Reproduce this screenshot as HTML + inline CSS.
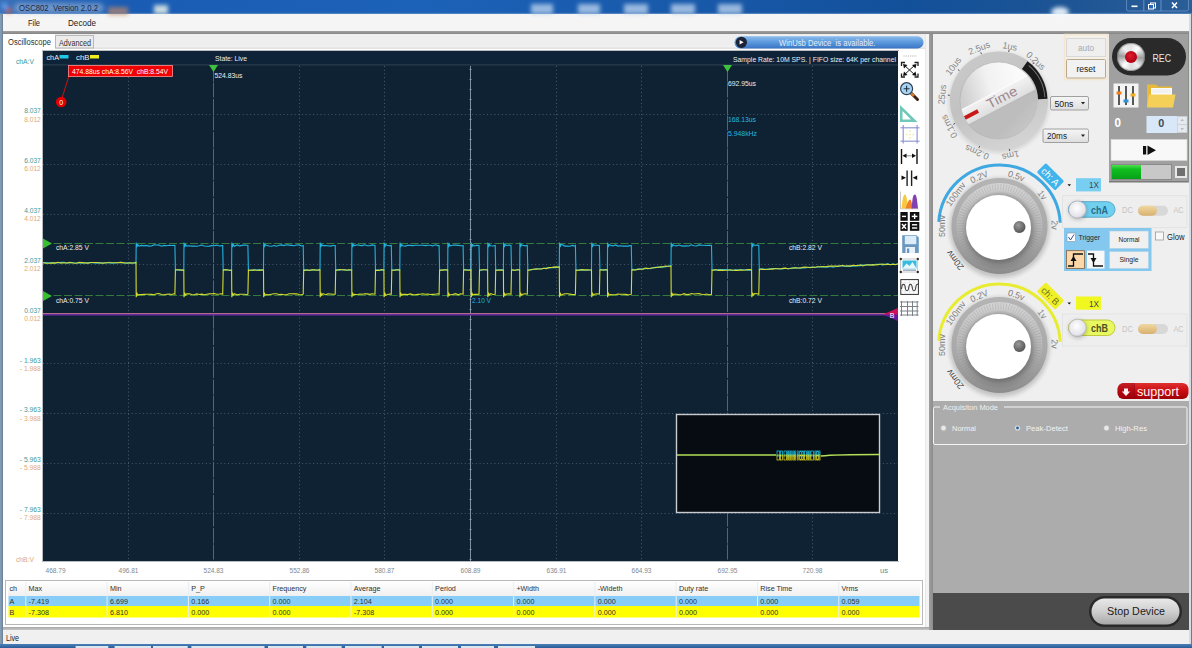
<!DOCTYPE html>
<html><head><meta charset="utf-8">
<style>
*{margin:0;padding:0;box-sizing:border-box}
html,body{width:1192px;height:648px;overflow:hidden;background:#f0f0f0;font-family:"Liberation Sans",sans-serif;position:relative}
.a{position:absolute}
svg text{font-family:"Liberation Sans",sans-serif}
</style></head><body>
<!-- menu -->
<div class="a" style="left:0;top:14px;width:1192px;height:17px;background:#f5f5f5"></div>
<div class="a" style="left:0;top:31px;width:1192px;height:3px;background:linear-gradient(#a0a0a0,#858585)"></div>
<!-- tab strip -->
<div class="a" style="left:0;top:34px;width:929px;height:16px;background:linear-gradient(#eeeeee 0,#eeeeee 11px,#f2f2f2 12px,#dedede 15px,#ffffff 16px)"></div>
<div class="a" style="left:3px;top:34px;width:52px;height:16px;background:#ffffff"></div>
<!-- left panel -->
<div class="a" style="left:3px;top:49px;width:923px;height:578px;background:#ffffff"></div>
<div class="a" style="left:925px;top:34px;width:1px;height:593px;background:#e8e8e8"></div>
<div class="a" style="left:42px;top:50px;width:857px;height:512px;background:#b8bcc0"></div>
<svg class="a" style="left:43px;top:51px" width="855" height="510" viewBox="43 51 855 510">
<rect x="43" y="51" width="855" height="510" fill="#0f2233"/>
<rect x="43" y="51" width="855" height="13.5" fill="#0e2238"/>
<line x1="43" y1="64.8" x2="898" y2="64.8" stroke="#2a3c4e" stroke-width="1.2"/>
<line x1="128.5" y1="66" x2="128.5" y2="561" stroke="#6a7a8a" stroke-width="1" stroke-dasharray="1 2.7" opacity="0.65"/>
<line x1="213.5" y1="66" x2="213.5" y2="561" stroke="#6a7a8a" stroke-width="1" stroke-dasharray="1 2.7" opacity="0.65"/>
<line x1="299.5" y1="66" x2="299.5" y2="561" stroke="#6a7a8a" stroke-width="1" stroke-dasharray="1 2.7" opacity="0.65"/>
<line x1="384.5" y1="66" x2="384.5" y2="561" stroke="#6a7a8a" stroke-width="1" stroke-dasharray="1 2.7" opacity="0.65"/>
<line x1="556.5" y1="66" x2="556.5" y2="561" stroke="#6a7a8a" stroke-width="1" stroke-dasharray="1 2.7" opacity="0.65"/>
<line x1="641.5" y1="66" x2="641.5" y2="561" stroke="#6a7a8a" stroke-width="1" stroke-dasharray="1 2.7" opacity="0.65"/>
<line x1="727.5" y1="66" x2="727.5" y2="561" stroke="#6a7a8a" stroke-width="1" stroke-dasharray="1 2.7" opacity="0.65"/>
<line x1="812.5" y1="66" x2="812.5" y2="561" stroke="#6a7a8a" stroke-width="1" stroke-dasharray="1 2.7" opacity="0.65"/>
<line x1="43" y1="114.5" x2="898" y2="114.5" stroke="#6a7a8a" stroke-width="1" stroke-dasharray="1 2.7" opacity="0.6"/>
<line x1="43" y1="164.5" x2="898" y2="164.5" stroke="#6a7a8a" stroke-width="1" stroke-dasharray="1 2.7" opacity="0.6"/>
<line x1="43" y1="214.5" x2="898" y2="214.5" stroke="#6a7a8a" stroke-width="1" stroke-dasharray="1 2.7" opacity="0.6"/>
<line x1="43" y1="264.5" x2="898" y2="264.5" stroke="#6a7a8a" stroke-width="1" stroke-dasharray="1 2.7" opacity="0.6"/>
<line x1="43" y1="313.5" x2="898" y2="313.5" stroke="#6a7a8a" stroke-width="1" stroke-dasharray="1 2.7" opacity="0.6"/>
<line x1="43" y1="363.5" x2="898" y2="363.5" stroke="#6a7a8a" stroke-width="1" stroke-dasharray="1 2.7" opacity="0.6"/>
<line x1="43" y1="413.5" x2="898" y2="413.5" stroke="#6a7a8a" stroke-width="1" stroke-dasharray="1 2.7" opacity="0.6"/>
<line x1="43" y1="463.5" x2="898" y2="463.5" stroke="#6a7a8a" stroke-width="1" stroke-dasharray="1 2.7" opacity="0.6"/>
<line x1="43" y1="513.5" x2="898" y2="513.5" stroke="#6a7a8a" stroke-width="1" stroke-dasharray="1 2.7" opacity="0.6"/>
<line x1="470.5" y1="66" x2="470.5" y2="561" stroke="#8090a0" stroke-width="1"/>
<rect x="469.5" y="69" width="2" height="1" fill="#98a8b8" opacity="0.8"/>
<rect x="469.5" y="79" width="2" height="1" fill="#98a8b8" opacity="0.8"/>
<rect x="469.5" y="89" width="2" height="1" fill="#98a8b8" opacity="0.8"/>
<rect x="469.5" y="99" width="2" height="1" fill="#98a8b8" opacity="0.8"/>
<rect x="469.5" y="109" width="2" height="1" fill="#98a8b8" opacity="0.8"/>
<rect x="469.5" y="119" width="2" height="1" fill="#98a8b8" opacity="0.8"/>
<rect x="469.5" y="129" width="2" height="1" fill="#98a8b8" opacity="0.8"/>
<rect x="469.5" y="139" width="2" height="1" fill="#98a8b8" opacity="0.8"/>
<rect x="469.5" y="149" width="2" height="1" fill="#98a8b8" opacity="0.8"/>
<rect x="469.5" y="159" width="2" height="1" fill="#98a8b8" opacity="0.8"/>
<rect x="469.5" y="169" width="2" height="1" fill="#98a8b8" opacity="0.8"/>
<rect x="469.5" y="179" width="2" height="1" fill="#98a8b8" opacity="0.8"/>
<rect x="469.5" y="189" width="2" height="1" fill="#98a8b8" opacity="0.8"/>
<rect x="469.5" y="199" width="2" height="1" fill="#98a8b8" opacity="0.8"/>
<rect x="469.5" y="209" width="2" height="1" fill="#98a8b8" opacity="0.8"/>
<rect x="469.5" y="219" width="2" height="1" fill="#98a8b8" opacity="0.8"/>
<rect x="469.5" y="229" width="2" height="1" fill="#98a8b8" opacity="0.8"/>
<rect x="469.5" y="239" width="2" height="1" fill="#98a8b8" opacity="0.8"/>
<rect x="469.5" y="249" width="2" height="1" fill="#98a8b8" opacity="0.8"/>
<rect x="469.5" y="259" width="2" height="1" fill="#98a8b8" opacity="0.8"/>
<rect x="469.5" y="269" width="2" height="1" fill="#98a8b8" opacity="0.8"/>
<rect x="469.5" y="279" width="2" height="1" fill="#98a8b8" opacity="0.8"/>
<rect x="469.5" y="289" width="2" height="1" fill="#98a8b8" opacity="0.8"/>
<rect x="469.5" y="299" width="2" height="1" fill="#98a8b8" opacity="0.8"/>
<rect x="469.5" y="309" width="2" height="1" fill="#98a8b8" opacity="0.8"/>
<rect x="469.5" y="319" width="2" height="1" fill="#98a8b8" opacity="0.8"/>
<rect x="469.5" y="329" width="2" height="1" fill="#98a8b8" opacity="0.8"/>
<rect x="469.5" y="339" width="2" height="1" fill="#98a8b8" opacity="0.8"/>
<rect x="469.5" y="349" width="2" height="1" fill="#98a8b8" opacity="0.8"/>
<rect x="469.5" y="359" width="2" height="1" fill="#98a8b8" opacity="0.8"/>
<rect x="469.5" y="369" width="2" height="1" fill="#98a8b8" opacity="0.8"/>
<rect x="469.5" y="379" width="2" height="1" fill="#98a8b8" opacity="0.8"/>
<rect x="469.5" y="389" width="2" height="1" fill="#98a8b8" opacity="0.8"/>
<rect x="469.5" y="399" width="2" height="1" fill="#98a8b8" opacity="0.8"/>
<rect x="469.5" y="409" width="2" height="1" fill="#98a8b8" opacity="0.8"/>
<rect x="469.5" y="419" width="2" height="1" fill="#98a8b8" opacity="0.8"/>
<rect x="469.5" y="429" width="2" height="1" fill="#98a8b8" opacity="0.8"/>
<rect x="469.5" y="439" width="2" height="1" fill="#98a8b8" opacity="0.8"/>
<rect x="469.5" y="449" width="2" height="1" fill="#98a8b8" opacity="0.8"/>
<rect x="469.5" y="459" width="2" height="1" fill="#98a8b8" opacity="0.8"/>
<rect x="469.5" y="469" width="2" height="1" fill="#98a8b8" opacity="0.8"/>
<rect x="469.5" y="479" width="2" height="1" fill="#98a8b8" opacity="0.8"/>
<rect x="469.5" y="489" width="2" height="1" fill="#98a8b8" opacity="0.8"/>
<rect x="469.5" y="499" width="2" height="1" fill="#98a8b8" opacity="0.8"/>
<rect x="469.5" y="509" width="2" height="1" fill="#98a8b8" opacity="0.8"/>
<rect x="469.5" y="519" width="2" height="1" fill="#98a8b8" opacity="0.8"/>
<rect x="469.5" y="529" width="2" height="1" fill="#98a8b8" opacity="0.8"/>
<rect x="469.5" y="539" width="2" height="1" fill="#98a8b8" opacity="0.8"/>
<rect x="469.5" y="549" width="2" height="1" fill="#98a8b8" opacity="0.8"/>
<rect x="469.5" y="559" width="2" height="1" fill="#98a8b8" opacity="0.8"/>
<line x1="43" y1="243.5" x2="898" y2="243.5" stroke="#337a3c" stroke-width="1" stroke-dasharray="8 2.5"/>
<line x1="43" y1="295.5" x2="898" y2="295.5" stroke="#337a3c" stroke-width="1" stroke-dasharray="8 2.5"/>
<line x1="213.5" y1="66" x2="213.5" y2="561" stroke="#3a7a4a" stroke-width="1" stroke-dasharray="15 1.5"/>
<polygon points="209.0,65 218.0,65 213.5,72" fill="#3ec23e"/>
<line x1="727.5" y1="66" x2="727.5" y2="561" stroke="#3a7a4a" stroke-width="1" stroke-dasharray="15 1.5"/>
<polygon points="723.0,65 732.0,65 727.5,72" fill="#3ec23e"/>
<line x1="43" y1="313.6" x2="898" y2="313.6" stroke="#c07090" stroke-width="1"/>
<line x1="43" y1="314.8" x2="898" y2="314.8" stroke="#6a2ca0" stroke-width="1.4"/>
<path d="M43.0,262.8 L46.0,262.5 L49.0,262.8 L52.0,262.7 L55.0,262.9 L58.0,262.9 L61.0,262.4 L64.0,262.3 L67.0,263.1 L70.0,262.6 L73.0,262.5 L76.0,263.3 L79.0,262.8 L82.0,263.1 L85.0,262.8 L88.0,262.9 L91.0,262.5 L94.0,262.9 L97.0,263.2 L100.0,262.8 L103.0,263.0 L106.0,263.0 L109.0,262.4 L112.0,263.1 L115.0,262.9 L118.0,262.6 L121.0,262.3 L124.0,263.2 L127.0,262.8 L130.0,263.0 L133.0,263.2 L136.0,263.0 L136.2,242.5 L136.9,247.0 L137.6,244.5 L139.0,246.1 L141.5,245.4 L144.0,245.9 L146.5,245.4 L149.0,246.1 L151.5,246.0 L154.0,244.9 L156.5,245.0 L159.0,245.1 L161.5,246.2 L164.0,245.4 L166.5,245.7 L169.0,245.2 L171.5,245.5 L174.0,245.3 L174.9,245.5 L175.4,270.0 L175.4,270.0 L176.4,269.9 L178.9,270.1 L181.4,270.1 L183.8,270.0 L184.0,242.5 L184.7,247.0 L185.4,244.5 L186.8,246.1 L189.3,245.8 L191.8,246.1 L194.3,246.0 L196.8,246.2 L199.3,245.7 L201.8,245.0 L204.3,246.0 L206.8,246.2 L209.3,246.1 L211.8,245.6 L214.3,245.8 L216.8,245.1 L219.3,246.0 L221.8,245.6 L222.7,245.5 L223.2,270.0 L223.2,270.0 L224.2,269.8 L226.7,269.6 L229.2,270.4 L231.6,270.0 L231.8,242.5 L232.5,247.0 L233.2,244.5 L234.6,246.2 L237.1,244.9 L239.6,245.9 L242.1,245.4 L244.6,245.0 L247.1,245.2 L247.9,245.5 L248.4,270.0 L248.4,270.0 L249.4,270.3 L251.9,270.4 L254.4,269.5 L256.9,270.1 L259.4,269.5 L261.9,270.2 L263.5,270.0 L263.7,242.5 L264.4,247.0 L265.1,244.5 L266.5,245.3 L269.0,246.0 L271.5,246.2 L274.0,245.5 L276.5,246.2 L279.0,245.2 L281.5,244.9 L284.0,245.6 L286.5,244.8 L289.0,245.1 L291.5,245.4 L294.0,245.7 L296.5,245.0 L299.0,244.9 L301.5,246.0 L303.2,245.5 L303.7,270.0 L303.7,270.0 L304.7,269.8 L307.2,270.5 L309.7,270.4 L312.2,269.9 L314.7,270.0 L317.2,270.0 L319.7,270.1 L320.0,270.0 L320.2,242.5 L320.9,247.0 L321.6,244.5 L323.0,245.6 L325.5,245.6 L328.0,245.7 L330.5,246.1 L333.0,245.5 L335.2,245.5 L335.7,270.0 L335.7,270.0 L336.7,269.9 L339.2,270.2 L341.7,269.7 L344.2,269.8 L346.7,270.5 L349.2,270.0 L351.7,270.0 L351.9,242.5 L352.6,247.0 L353.3,244.5 L354.7,245.6 L357.2,244.8 L359.7,245.4 L362.2,245.6 L364.7,244.8 L367.2,245.7 L369.7,245.7 L372.2,244.9 L375.0,245.5 L375.5,270.0 L375.5,270.0 L376.5,270.1 L379.0,270.0 L381.5,270.2 L383.9,270.0 L384.1,242.5 L384.8,247.0 L385.5,244.5 L386.9,245.3 L389.4,245.8 L391.3,245.5 L391.8,270.0 L391.8,270.0 L392.8,270.2 L395.3,269.5 L397.8,269.6 L399.8,270.0 L400.0,242.5 L400.7,247.0 L401.4,244.5 L402.8,245.7 L405.3,246.1 L407.8,245.2 L410.3,245.4 L412.8,245.6 L415.3,245.2 L417.8,245.3 L420.3,245.2 L422.8,245.3 L425.3,245.6 L427.8,245.2 L430.3,245.3 L432.8,245.9 L435.3,244.8 L437.8,245.6 L439.1,245.5 L439.6,270.0 L439.6,270.0 L440.6,270.2 L443.1,269.8 L445.6,269.7 L447.7,270.0 L447.9,242.5 L448.6,247.0 L449.3,244.5 L450.7,245.9 L453.2,245.1 L455.7,245.1 L458.2,245.4 L460.7,245.8 L463.1,245.5 L463.6,270.0 L463.6,270.0 L464.6,269.6 L467.1,269.8 L469.6,269.8 L471.1,270.0 L471.3,242.5 L472.0,247.0 L472.7,244.5 L474.1,246.0 L476.6,245.4 L479.0,245.5 L479.5,270.0 L479.5,270.0 L480.5,270.4 L483.0,269.7 L485.5,269.8 L487.6,270.0 L487.8,242.5 L488.5,247.0 L489.2,244.5 L490.6,245.7 L493.1,246.0 L495.2,245.5 L495.7,270.0 L495.7,270.0 L496.7,270.0 L499.2,269.7 L501.7,269.6 L503.4,270.0 L503.6,242.5 L504.3,247.0 L505.0,244.5 L506.4,245.5 L508.9,245.1 L511.0,245.5 L511.5,270.0 L511.5,270.0 L512.5,270.3 L515.0,270.3 L517.5,269.7 L519.7,270.0 L519.9,242.5 L520.6,247.0 L521.3,244.5 L522.7,245.2 L525.2,245.9 L527.3,245.5 L527.8,270.0 L527.8,270.0 L528.8,270.0 L531.3,270.0 L533.8,269.3 L536.3,268.8 L538.8,268.7 L541.3,269.0 L543.8,268.2 L546.3,268.1 L548.8,267.9 L551.3,267.7 L553.8,267.4 L556.3,267.7 L558.8,266.7 L559.3,267.0 L559.5,242.5 L560.2,247.0 L560.9,244.5 L562.3,244.8 L564.8,246.1 L567.3,246.0 L569.8,246.2 L572.3,245.4 L574.8,246.1 L575.4,245.5 L575.9,270.0 L575.9,270.0 L576.9,270.4 L579.4,269.7 L581.9,270.2 L584.4,270.3 L586.9,270.2 L589.4,270.0 L591.5,270.0 L591.7,242.5 L592.4,247.0 L593.1,244.5 L594.5,245.2 L597.0,245.3 L599.4,245.5 L599.9,270.0 L599.9,270.0 L600.9,269.7 L603.4,269.6 L605.9,270.1 L607.4,270.0 L607.6,242.5 L608.3,247.0 L609.0,244.5 L610.4,245.2 L612.9,245.9 L615.4,244.9 L617.9,246.1 L620.4,245.8 L622.9,246.1 L625.4,246.1 L627.9,246.1 L630.4,245.6 L631.3,245.5 L631.8,270.0 L631.8,270.0 L632.8,269.4 L635.3,269.9 L637.8,269.1 L640.3,268.9 L642.8,269.0 L645.3,268.6 L647.8,268.3 L650.3,268.6 L652.8,268.0 L655.3,267.4 L657.8,267.1 L660.3,267.5 L662.8,266.8 L665.3,266.9 L667.8,266.2 L670.3,265.8 L671.0,266.0 L671.2,242.5 L671.9,247.0 L672.6,244.5 L674.0,245.5 L676.5,245.9 L679.0,245.0 L681.5,245.9 L684.0,246.1 L686.5,245.9 L689.0,246.0 L691.5,244.8 L694.0,245.7 L696.5,246.0 L699.0,244.9 L701.5,245.2 L704.0,245.2 L706.5,245.5 L709.0,245.4 L711.5,245.5 L712.0,270.0 L712.0,270.0 L713.0,270.0 L715.5,270.3 L718.0,269.5 L720.5,269.6 L723.0,269.6 L725.5,269.6 L728.0,269.6 L730.5,270.5 L733.0,270.4 L735.5,269.6 L738.0,270.0 L740.5,269.8 L743.0,269.8 L745.5,269.9 L748.0,270.1 L750.5,270.1 L751.6,270.0 L751.8,242.5 L752.5,247.0 L753.2,244.5 L754.6,245.3 L757.1,245.1 L758.8,245.5 L759.3,269.5 L760.3,269.3 L762.8,268.9 L765.3,269.3 L767.8,269.4 L770.3,268.9 L772.8,268.5 L775.3,268.5 L777.8,268.6 L780.3,268.8 L782.8,268.9 L785.3,268.3 L787.8,268.7 L790.3,268.4 L792.8,268.1 L795.3,267.9 L797.8,268.0 L800.3,268.1 L802.8,267.7 L805.3,267.9 L807.8,267.5 L810.3,267.2 L812.8,267.4 L815.3,267.5 L817.8,266.7 L820.3,267.0 L822.8,266.9 L825.3,267.3 L827.8,267.3 L830.3,266.5 L832.8,267.1 L835.3,266.8 L837.8,266.1 L840.3,266.2 L842.8,265.7 L845.3,266.5 L847.8,266.2 L850.3,266.4 L852.8,266.1 L855.3,265.9 L857.8,265.9 L860.3,265.6 L862.8,264.9 L865.3,265.4 L867.8,264.6 L870.3,264.7 L872.8,265.3 L875.3,264.4 L877.8,264.3 L880.3,264.2 L882.8,265.1 L885.3,264.1 L887.8,263.8 L890.3,264.7 L892.8,263.8 L895.3,264.5 L897.8,264.2 L898.0,264.0" fill="none" stroke="#22b2de" stroke-width="1.1"/>
<path d="M43.0,262.8 L46.0,263.1 L49.0,263.3 L52.0,262.9 L55.0,263.1 L58.0,262.3 L61.0,263.1 L64.0,262.8 L67.0,263.0 L70.0,262.4 L73.0,263.0 L76.0,263.2 L79.0,262.4 L82.0,262.6 L85.0,262.9 L88.0,263.1 L91.0,262.5 L94.0,262.5 L97.0,262.5 L100.0,262.9 L103.0,263.1 L106.0,262.7 L109.0,262.7 L112.0,262.7 L115.0,262.7 L118.0,262.7 L121.0,262.4 L124.0,262.8 L127.0,263.3 L130.0,262.7 L133.0,263.0 L136.0,262.5 L136.2,297.2 L136.9,292.7 L137.6,295.2 L139.0,294.5 L141.5,294.6 L144.0,294.4 L146.5,294.2 L149.0,294.2 L151.5,294.4 L154.0,294.8 L156.5,293.7 L159.0,293.6 L161.5,294.5 L164.0,294.8 L166.5,294.2 L169.0,294.1 L171.5,294.5 L174.0,293.8 L174.9,294.2 L175.4,270.0 L175.4,270.0 L176.4,269.8 L178.9,269.7 L181.4,270.1 L183.8,270.0 L184.0,297.2 L184.7,292.7 L185.4,295.2 L186.8,293.9 L189.3,293.8 L191.8,294.5 L194.3,294.8 L196.8,293.9 L199.3,294.5 L201.8,294.1 L204.3,294.7 L206.8,294.3 L209.3,293.9 L211.8,293.8 L214.3,293.5 L216.8,294.2 L219.3,294.0 L221.8,293.7 L222.7,294.2 L223.2,270.0 L223.2,270.0 L224.2,269.9 L226.7,269.8 L229.2,270.3 L231.6,270.0 L231.8,297.2 L232.5,292.7 L233.2,295.2 L234.6,293.7 L237.1,294.9 L239.6,294.2 L242.1,294.3 L244.6,294.2 L247.1,294.7 L247.9,294.2 L248.4,270.0 L248.4,270.0 L249.4,270.3 L251.9,270.1 L254.4,270.0 L256.9,270.2 L259.4,270.4 L261.9,269.9 L263.5,270.0 L263.7,297.2 L264.4,292.7 L265.1,295.2 L266.5,294.5 L269.0,294.8 L271.5,294.2 L274.0,293.8 L276.5,293.8 L279.0,294.5 L281.5,294.4 L284.0,294.8 L286.5,294.7 L289.0,293.8 L291.5,293.8 L294.0,293.9 L296.5,293.8 L299.0,294.5 L301.5,294.7 L303.2,294.2 L303.7,270.0 L303.7,270.0 L304.7,270.4 L307.2,269.8 L309.7,270.4 L312.2,269.8 L314.7,269.9 L317.2,270.2 L319.7,269.6 L320.0,270.0 L320.2,297.2 L320.9,292.7 L321.6,295.2 L323.0,293.6 L325.5,294.7 L328.0,293.9 L330.5,294.0 L333.0,294.3 L335.2,294.2 L335.7,270.0 L335.7,270.0 L336.7,270.2 L339.2,269.5 L341.7,269.8 L344.2,269.9 L346.7,270.0 L349.2,269.7 L351.7,270.0 L351.9,297.2 L352.6,292.7 L353.3,295.2 L354.7,294.3 L357.2,294.8 L359.7,294.0 L362.2,294.3 L364.7,293.7 L367.2,293.9 L369.7,294.4 L372.2,293.7 L375.0,294.2 L375.5,270.0 L375.5,270.0 L376.5,270.4 L379.0,270.4 L381.5,269.6 L383.9,270.0 L384.1,297.2 L384.8,292.7 L385.5,295.2 L386.9,294.8 L389.4,294.0 L391.3,294.2 L391.8,270.0 L391.8,270.0 L392.8,270.3 L395.3,270.3 L397.8,269.8 L399.8,270.0 L400.0,297.2 L400.7,292.7 L401.4,295.2 L402.8,294.4 L405.3,294.4 L407.8,294.6 L410.3,293.9 L412.8,294.6 L415.3,294.8 L417.8,294.4 L420.3,294.3 L422.8,293.7 L425.3,294.2 L427.8,294.0 L430.3,294.5 L432.8,294.4 L435.3,294.3 L437.8,293.8 L439.1,294.2 L439.6,270.0 L439.6,270.0 L440.6,270.1 L443.1,270.1 L445.6,269.7 L447.7,270.0 L447.9,297.2 L448.6,292.7 L449.3,295.2 L450.7,294.7 L453.2,294.4 L455.7,293.7 L458.2,294.8 L460.7,293.7 L463.1,294.2 L463.6,270.0 L463.6,270.0 L464.6,269.8 L467.1,270.2 L469.6,270.1 L471.1,270.0 L471.3,297.2 L472.0,292.7 L472.7,295.2 L474.1,294.3 L476.6,294.4 L479.0,294.2 L479.5,270.0 L479.5,270.0 L480.5,270.0 L483.0,269.8 L485.5,269.7 L487.6,270.0 L487.8,297.2 L488.5,292.7 L489.2,295.2 L490.6,293.6 L493.1,294.5 L495.2,294.2 L495.7,270.0 L495.7,270.0 L496.7,270.3 L499.2,270.0 L501.7,270.2 L503.4,270.0 L503.6,297.2 L504.3,292.7 L505.0,295.2 L506.4,294.0 L508.9,293.9 L511.0,294.2 L511.5,270.0 L511.5,270.0 L512.5,269.9 L515.0,270.4 L517.5,269.5 L519.7,270.0 L519.9,297.2 L520.6,292.7 L521.3,295.2 L522.7,294.2 L525.2,293.8 L527.3,294.2 L527.8,270.0 L527.8,270.0 L528.8,270.2 L531.3,269.5 L533.8,269.3 L536.3,269.1 L538.8,269.0 L541.3,269.0 L543.8,268.3 L546.3,268.6 L548.8,267.6 L551.3,267.5 L553.8,267.1 L556.3,266.9 L558.8,267.3 L559.3,267.0 L559.5,297.2 L560.2,292.7 L560.9,295.2 L562.3,294.5 L564.8,293.8 L567.3,293.8 L569.8,294.1 L572.3,294.5 L574.8,294.6 L575.4,294.2 L575.9,270.0 L575.9,270.0 L576.9,270.2 L579.4,270.1 L581.9,269.6 L584.4,269.9 L586.9,269.7 L589.4,270.0 L591.5,270.0 L591.7,297.2 L592.4,292.7 L593.1,295.2 L594.5,294.3 L597.0,293.8 L599.4,294.2 L599.9,270.0 L599.9,270.0 L600.9,269.8 L603.4,270.3 L605.9,269.5 L607.4,270.0 L607.6,297.2 L608.3,292.7 L609.0,295.2 L610.4,294.6 L612.9,294.7 L615.4,294.8 L617.9,294.0 L620.4,294.3 L622.9,294.3 L625.4,294.4 L627.9,294.9 L630.4,294.5 L631.3,294.2 L631.8,270.0 L631.8,270.0 L632.8,269.7 L635.3,270.0 L637.8,269.4 L640.3,269.2 L642.8,269.1 L645.3,268.1 L647.8,268.6 L650.3,268.3 L652.8,267.8 L655.3,267.6 L657.8,267.3 L660.3,266.8 L662.8,266.9 L665.3,266.1 L667.8,266.3 L670.3,266.2 L671.0,266.0 L671.2,297.2 L671.9,292.7 L672.6,295.2 L674.0,294.1 L676.5,294.3 L679.0,294.8 L681.5,294.7 L684.0,293.7 L686.5,294.6 L689.0,294.4 L691.5,293.6 L694.0,294.0 L696.5,293.8 L699.0,293.6 L701.5,294.3 L704.0,294.8 L706.5,294.0 L709.0,294.7 L711.5,294.2 L712.0,270.0 L712.0,270.0 L713.0,270.2 L715.5,269.6 L718.0,270.4 L720.5,270.1 L723.0,270.4 L725.5,270.2 L728.0,270.2 L730.5,269.8 L733.0,270.3 L735.5,270.4 L738.0,270.4 L740.5,269.9 L743.0,270.3 L745.5,270.0 L748.0,269.6 L750.5,269.5 L751.6,270.0 L751.8,297.2 L752.5,292.7 L753.2,295.2 L754.6,293.6 L757.1,293.8 L758.8,294.2 L759.3,269.5 L760.3,269.1 L762.8,269.4 L765.3,269.5 L767.8,269.2 L770.3,269.0 L772.8,269.1 L775.3,268.6 L777.8,268.7 L780.3,269.0 L782.8,268.4 L785.3,268.1 L787.8,268.8 L790.3,268.5 L792.8,268.0 L795.3,267.9 L797.8,268.0 L800.3,268.0 L802.8,267.4 L805.3,267.1 L807.8,267.2 L810.3,267.8 L812.8,267.0 L815.3,267.2 L817.8,266.8 L820.3,266.7 L822.8,266.6 L825.3,266.8 L827.8,266.4 L830.3,266.1 L832.8,266.1 L835.3,266.1 L837.8,266.4 L840.3,265.8 L842.8,265.6 L845.3,266.0 L847.8,265.9 L850.3,266.1 L852.8,265.3 L855.3,265.6 L857.8,265.5 L860.3,264.9 L862.8,266.0 L865.3,265.0 L867.8,264.7 L870.3,265.1 L872.8,264.6 L875.3,265.0 L877.8,264.6 L880.3,264.3 L882.8,264.1 L885.3,264.8 L887.8,264.1 L890.3,264.7 L892.8,264.2 L895.3,264.6 L897.8,263.8 L898.0,264.0" fill="none" stroke="#d4dc30" stroke-width="1.1"/>
<text x="46.5" y="59.5" fill="#e8eef4" font-size="8" font-family="Liberation Sans" text-anchor="start" font-weight="normal" textLength="12.5" lengthAdjust="spacingAndGlyphs">chA</text>
<rect x="59.5" y="55" width="9" height="3.5" fill="#20c8e8"/>
<text x="76" y="59.5" fill="#e8eef4" font-size="8" font-family="Liberation Sans" text-anchor="start" font-weight="normal" textLength="13.5" lengthAdjust="spacingAndGlyphs">chB</text>
<rect x="90" y="55" width="9" height="3.5" fill="#f0f020"/>
<text x="215" y="61" fill="#e8eef4" font-size="8" font-family="Liberation Sans" text-anchor="start" font-weight="normal" textLength="32" lengthAdjust="spacingAndGlyphs">State: Live</text>
<text x="733" y="61.5" fill="#e8eef4" font-size="8" font-family="Liberation Sans" text-anchor="start" font-weight="normal" textLength="163" lengthAdjust="spacingAndGlyphs">Sample Rate: 10M SPS. | FIFO size: 64K per channel</text>
<line x1="61" y1="101" x2="69" y2="76" stroke="#d01010" stroke-width="1"/>
<rect x="68.5" y="65.5" width="104" height="11" fill="#f00000" stroke="#ff9090" stroke-width="0.8"/>
<text x="72" y="73.5" fill="#ffffff" font-size="8" font-family="Liberation Sans" text-anchor="start" font-weight="normal" textLength="96" lengthAdjust="spacingAndGlyphs">474.88us chA:8.56V&#160; chB:8.54V</text>
<circle cx="61.2" cy="102" r="5.3" fill="#e00000"/>
<text x="61.2" y="104.8" fill="#ffffff" font-size="7" font-family="Liberation Sans" text-anchor="middle" font-weight="normal">0</text>
<text x="214.5" y="77.5" fill="#e8eef4" font-size="8" font-family="Liberation Sans" text-anchor="start" font-weight="normal" textLength="28" lengthAdjust="spacingAndGlyphs">524.83us</text>
<text x="728" y="86" fill="#e8eef4" font-size="8" font-family="Liberation Sans" text-anchor="start" font-weight="normal" textLength="28" lengthAdjust="spacingAndGlyphs">692.95us</text>
<text x="728" y="122" fill="#20b8e0" font-size="8" font-family="Liberation Sans" text-anchor="start" font-weight="normal" textLength="28" lengthAdjust="spacingAndGlyphs">168.13us</text>
<text x="728" y="135.5" fill="#20b8e0" font-size="8" font-family="Liberation Sans" text-anchor="start" font-weight="normal" textLength="29" lengthAdjust="spacingAndGlyphs">5.948kHz</text>
<text x="56" y="249.5" fill="#e8eef4" font-size="8" font-family="Liberation Sans" text-anchor="start" font-weight="normal" textLength="33" lengthAdjust="spacingAndGlyphs">chA:2.85 V</text>
<text x="56" y="303" fill="#e8eef4" font-size="8" font-family="Liberation Sans" text-anchor="start" font-weight="normal" textLength="33" lengthAdjust="spacingAndGlyphs">chA:0.75 V</text>
<text x="789" y="249.5" fill="#e8eef4" font-size="8" font-family="Liberation Sans" text-anchor="start" font-weight="normal" textLength="33" lengthAdjust="spacingAndGlyphs">chB:2.82 V</text>
<text x="789" y="303" fill="#e8eef4" font-size="8" font-family="Liberation Sans" text-anchor="start" font-weight="normal" textLength="33" lengthAdjust="spacingAndGlyphs">chB:0.72 V</text>
<text x="472" y="303" fill="#20b0d8" font-size="8" font-family="Liberation Sans" text-anchor="start" font-weight="normal" textLength="19" lengthAdjust="spacingAndGlyphs">2.10 V</text>
<polygon points="43,238.5 52,243.5 43,248.5" fill="#38c030"/>
<polygon points="43,291 52,296 43,301" fill="#38c030"/>
<polygon points="898,308 898,321 883,314.5" fill="#d0105a"/>
<polygon points="898,314.5 898,321 883,314.5" fill="#3020c0" opacity="0.7"/>
<text x="892" y="317.5" fill="#ffffff" font-size="7" font-family="Liberation Sans" text-anchor="middle" font-weight="normal">B</text>
<rect x="676.5" y="414.5" width="203" height="98" fill="#070b12" stroke="#c8ccd0" stroke-width="1.4"/>
<line x1="677" y1="455" x2="776" y2="455" stroke="#b4e058" stroke-width="1.3"/>
<path d="M821,456 Q835,454.5 879,454.5" fill="none" stroke="#b4e058" stroke-width="1.3"/>
<rect x="777.0" y="451" width="2.5" height="5" fill="none" stroke="#20d0f0" stroke-width="0.7"/>
<rect x="777.0" y="455" width="2.5" height="5" fill="none" stroke="#f0e820" stroke-width="0.7"/>
<rect x="780.5" y="451" width="2.0" height="5" fill="none" stroke="#20d0f0" stroke-width="0.7"/>
<rect x="780.5" y="455" width="2.0" height="5" fill="none" stroke="#f0e820" stroke-width="0.7"/>
<rect x="784.0" y="451" width="2.5" height="5" fill="none" stroke="#20d0f0" stroke-width="0.7"/>
<rect x="784.0" y="455" width="2.5" height="5" fill="none" stroke="#f0e820" stroke-width="0.7"/>
<rect x="787.3" y="451" width="1.0" height="5" fill="none" stroke="#20d0f0" stroke-width="0.7"/>
<rect x="787.3" y="455" width="1.0" height="5" fill="none" stroke="#f0e820" stroke-width="0.7"/>
<rect x="789.1" y="451" width="1.0" height="5" fill="none" stroke="#20d0f0" stroke-width="0.7"/>
<rect x="789.1" y="455" width="1.0" height="5" fill="none" stroke="#f0e820" stroke-width="0.7"/>
<rect x="790.9" y="451" width="1.0" height="5" fill="none" stroke="#20d0f0" stroke-width="0.7"/>
<rect x="790.9" y="455" width="1.0" height="5" fill="none" stroke="#f0e820" stroke-width="0.7"/>
<rect x="792.9" y="451" width="1.0" height="5" fill="none" stroke="#20d0f0" stroke-width="0.7"/>
<rect x="792.9" y="455" width="1.0" height="5" fill="none" stroke="#f0e820" stroke-width="0.7"/>
<rect x="794.7" y="451" width="1.0" height="5" fill="none" stroke="#20d0f0" stroke-width="0.7"/>
<rect x="794.7" y="455" width="1.0" height="5" fill="none" stroke="#f0e820" stroke-width="0.7"/>
<rect x="797.2" y="451" width="1.0" height="5" fill="none" stroke="#20d0f0" stroke-width="0.7"/>
<rect x="797.2" y="455" width="1.0" height="5" fill="none" stroke="#f0e820" stroke-width="0.7"/>
<rect x="799.7" y="451" width="1.5" height="5" fill="none" stroke="#20d0f0" stroke-width="0.7"/>
<rect x="799.7" y="455" width="1.5" height="5" fill="none" stroke="#f0e820" stroke-width="0.7"/>
<rect x="802.0" y="451" width="1.5" height="5" fill="none" stroke="#20d0f0" stroke-width="0.7"/>
<rect x="802.0" y="455" width="1.5" height="5" fill="none" stroke="#f0e820" stroke-width="0.7"/>
<rect x="804.5" y="451" width="2.0" height="5" fill="none" stroke="#20d0f0" stroke-width="0.7"/>
<rect x="804.5" y="455" width="2.0" height="5" fill="none" stroke="#f0e820" stroke-width="0.7"/>
<rect x="807.3" y="451" width="1.0" height="5" fill="none" stroke="#20d0f0" stroke-width="0.7"/>
<rect x="807.3" y="455" width="1.0" height="5" fill="none" stroke="#f0e820" stroke-width="0.7"/>
<rect x="809.1" y="451" width="1.0" height="5" fill="none" stroke="#20d0f0" stroke-width="0.7"/>
<rect x="809.1" y="455" width="1.0" height="5" fill="none" stroke="#f0e820" stroke-width="0.7"/>
<rect x="810.9" y="451" width="2.5" height="5" fill="none" stroke="#20d0f0" stroke-width="0.7"/>
<rect x="810.9" y="455" width="2.5" height="5" fill="none" stroke="#f0e820" stroke-width="0.7"/>
<rect x="814.9" y="451" width="1.0" height="5" fill="none" stroke="#20d0f0" stroke-width="0.7"/>
<rect x="814.9" y="455" width="1.0" height="5" fill="none" stroke="#f0e820" stroke-width="0.7"/>
<rect x="816.7" y="451" width="1.5" height="5" fill="none" stroke="#20d0f0" stroke-width="0.7"/>
<rect x="816.7" y="455" width="1.5" height="5" fill="none" stroke="#f0e820" stroke-width="0.7"/>
<rect x="819.0" y="451" width="1.0" height="5" fill="none" stroke="#20d0f0" stroke-width="0.7"/>
<rect x="819.0" y="455" width="1.0" height="5" fill="none" stroke="#f0e820" stroke-width="0.7"/>
</svg>
<!-- right panel -->
<div class="a" style="left:926px;top:34px;width:3px;height:593px;background:#f4f4f4"></div>
<div class="a" style="left:929px;top:34px;width:4px;height:596px;background:linear-gradient(90deg,#a0a0a0,#8c8c8c)"></div>
<div class="a" style="left:933px;top:34px;width:256px;height:367px;background:#efefef"></div>
<div class="a" style="left:933px;top:401px;width:256px;height:192px;background:#acacac"></div>
<div class="a" style="left:933px;top:593px;width:256px;height:37px;background:#4b4b4b"></div>
<!-- bottom -->
<div class="a" style="left:0;top:627px;width:929px;height:4px;background:linear-gradient(#a8a8a8,#d0d0d0)"></div>
<div class="a" style="left:0;top:630px;width:1192px;height:14px;background:#f0f0f0"></div>
<div class="a" style="left:0;top:644px;width:1192px;height:4px;background:linear-gradient(#4a80b8,#2a5c98)"></div>
<div class="a" style="left:0;top:14px;width:3px;height:630px;background:linear-gradient(90deg,#84a0b8,#7a94ac 60%,#6a7888)"></div>
<div class="a" style="left:1189px;top:14px;width:2px;height:630px;background:#d4dce4"></div>
<div class="a" style="left:1191px;top:14px;width:1px;height:630px;background:#6a7a98"></div>
<svg class="a" style="left:0;top:0" width="1192" height="648">
<text x="8" y="44.5" fill="#303030" font-size="8.5" font-family="Liberation Sans" text-anchor="start" font-weight="normal" textLength="43" lengthAdjust="spacingAndGlyphs">Oscilloscope</text>
<rect x="55.5" y="35.5" width="38" height="12.5" fill="#ececec" stroke="#b8b8b8" stroke-width="1"/>
<text x="59" y="45.5" fill="#303030" font-size="8.5" font-family="Liberation Sans" text-anchor="start" font-weight="normal" textLength="32" lengthAdjust="spacingAndGlyphs">Advanced</text>
<text x="28" y="26" fill="#222" font-size="8.5" font-family="Liberation Sans" text-anchor="start" font-weight="normal" textLength="12" lengthAdjust="spacingAndGlyphs">File</text>
<text x="68" y="26" fill="#222" font-size="8.5" font-family="Liberation Sans" text-anchor="start" font-weight="normal" textLength="28" lengthAdjust="spacingAndGlyphs">Decode</text>
<text x="16" y="64" fill="#3a9a9a" font-size="7.5" font-family="Liberation Sans" text-anchor="start" font-weight="normal" textLength="18" lengthAdjust="spacingAndGlyphs">chA:V</text>
<text x="16" y="561.5" fill="#e0a870" font-size="7.5" font-family="Liberation Sans" text-anchor="start" font-weight="normal" textLength="18" lengthAdjust="spacingAndGlyphs">chB:V</text>
<text x="40.8" y="113.3" fill="#3a9a9a" font-size="7.2" font-family="Liberation Sans" text-anchor="end" font-weight="normal" textLength="16.5" lengthAdjust="spacingAndGlyphs">8.037</text>
<text x="40.8" y="121.5" fill="#e0aa78" font-size="7.2" font-family="Liberation Sans" text-anchor="end" font-weight="normal" textLength="16.5" lengthAdjust="spacingAndGlyphs">8.012</text>
<text x="40.8" y="163.2" fill="#3a9a9a" font-size="7.2" font-family="Liberation Sans" text-anchor="end" font-weight="normal" textLength="16.5" lengthAdjust="spacingAndGlyphs">6.037</text>
<text x="40.8" y="171.4" fill="#e0aa78" font-size="7.2" font-family="Liberation Sans" text-anchor="end" font-weight="normal" textLength="16.5" lengthAdjust="spacingAndGlyphs">6.012</text>
<text x="40.8" y="213" fill="#3a9a9a" font-size="7.2" font-family="Liberation Sans" text-anchor="end" font-weight="normal" textLength="16.5" lengthAdjust="spacingAndGlyphs">4.037</text>
<text x="40.8" y="221.2" fill="#e0aa78" font-size="7.2" font-family="Liberation Sans" text-anchor="end" font-weight="normal" textLength="16.5" lengthAdjust="spacingAndGlyphs">4.012</text>
<text x="40.8" y="262.9" fill="#3a9a9a" font-size="7.2" font-family="Liberation Sans" text-anchor="end" font-weight="normal" textLength="16.5" lengthAdjust="spacingAndGlyphs">2.037</text>
<text x="40.8" y="271.1" fill="#e0aa78" font-size="7.2" font-family="Liberation Sans" text-anchor="end" font-weight="normal" textLength="16.5" lengthAdjust="spacingAndGlyphs">2.012</text>
<text x="40.8" y="312.8" fill="#3a9a9a" font-size="7.2" font-family="Liberation Sans" text-anchor="end" font-weight="normal" textLength="16.5" lengthAdjust="spacingAndGlyphs">0.037</text>
<text x="40.8" y="321.0" fill="#e0aa78" font-size="7.2" font-family="Liberation Sans" text-anchor="end" font-weight="normal" textLength="16.5" lengthAdjust="spacingAndGlyphs">0.012</text>
<text x="40.8" y="362.6" fill="#3a9a9a" font-size="7.2" font-family="Liberation Sans" text-anchor="end" font-weight="normal" textLength="21" lengthAdjust="spacingAndGlyphs">- 1.963</text>
<text x="40.8" y="370.8" fill="#e0aa78" font-size="7.2" font-family="Liberation Sans" text-anchor="end" font-weight="normal" textLength="21" lengthAdjust="spacingAndGlyphs">- 1.988</text>
<text x="40.8" y="412.4" fill="#3a9a9a" font-size="7.2" font-family="Liberation Sans" text-anchor="end" font-weight="normal" textLength="21" lengthAdjust="spacingAndGlyphs">- 3.963</text>
<text x="40.8" y="420.6" fill="#e0aa78" font-size="7.2" font-family="Liberation Sans" text-anchor="end" font-weight="normal" textLength="21" lengthAdjust="spacingAndGlyphs">- 3.988</text>
<text x="40.8" y="462.2" fill="#3a9a9a" font-size="7.2" font-family="Liberation Sans" text-anchor="end" font-weight="normal" textLength="21" lengthAdjust="spacingAndGlyphs">- 5.963</text>
<text x="40.8" y="470.4" fill="#e0aa78" font-size="7.2" font-family="Liberation Sans" text-anchor="end" font-weight="normal" textLength="21" lengthAdjust="spacingAndGlyphs">- 5.988</text>
<text x="40.8" y="512" fill="#3a9a9a" font-size="7.2" font-family="Liberation Sans" text-anchor="end" font-weight="normal" textLength="21" lengthAdjust="spacingAndGlyphs">- 7.963</text>
<text x="40.8" y="520.2" fill="#e0aa78" font-size="7.2" font-family="Liberation Sans" text-anchor="end" font-weight="normal" textLength="21" lengthAdjust="spacingAndGlyphs">- 7.988</text>
<text x="55.6" y="573.2" fill="#808890" font-size="7.2" font-family="Liberation Sans" text-anchor="middle" font-weight="normal" textLength="20" lengthAdjust="spacingAndGlyphs">468.79</text>
<text x="128.5" y="573.2" fill="#808890" font-size="7.2" font-family="Liberation Sans" text-anchor="middle" font-weight="normal" textLength="20" lengthAdjust="spacingAndGlyphs">496.81</text>
<text x="213.5" y="573.2" fill="#808890" font-size="7.2" font-family="Liberation Sans" text-anchor="middle" font-weight="normal" textLength="20" lengthAdjust="spacingAndGlyphs">524.83</text>
<text x="299.5" y="573.2" fill="#808890" font-size="7.2" font-family="Liberation Sans" text-anchor="middle" font-weight="normal" textLength="20" lengthAdjust="spacingAndGlyphs">552.86</text>
<text x="384.5" y="573.2" fill="#808890" font-size="7.2" font-family="Liberation Sans" text-anchor="middle" font-weight="normal" textLength="20" lengthAdjust="spacingAndGlyphs">580.87</text>
<text x="470.5" y="573.2" fill="#808890" font-size="7.2" font-family="Liberation Sans" text-anchor="middle" font-weight="normal" textLength="20" lengthAdjust="spacingAndGlyphs">608.89</text>
<text x="556.5" y="573.2" fill="#808890" font-size="7.2" font-family="Liberation Sans" text-anchor="middle" font-weight="normal" textLength="20" lengthAdjust="spacingAndGlyphs">636.91</text>
<text x="641.5" y="573.2" fill="#808890" font-size="7.2" font-family="Liberation Sans" text-anchor="middle" font-weight="normal" textLength="20" lengthAdjust="spacingAndGlyphs">664.93</text>
<text x="727.5" y="573.2" fill="#808890" font-size="7.2" font-family="Liberation Sans" text-anchor="middle" font-weight="normal" textLength="20" lengthAdjust="spacingAndGlyphs">692.95</text>
<text x="812.5" y="573.2" fill="#808890" font-size="7.2" font-family="Liberation Sans" text-anchor="middle" font-weight="normal" textLength="20" lengthAdjust="spacingAndGlyphs">720.98</text>
<text x="880" y="573.2" fill="#3a9a9a" font-size="7.2" font-family="Liberation Sans" text-anchor="start" font-weight="normal" textLength="8" lengthAdjust="spacingAndGlyphs">us</text>
<rect x="5.5" y="580.5" width="917" height="44" fill="#ffffff" stroke="#b8b8b8" stroke-width="1"/>
<defs><linearGradient id="hg" x1="0" y1="0" x2="0" y2="1"><stop offset="0" stop-color="#ffffff"/><stop offset="1" stop-color="#f0f0f0"/></linearGradient></defs>
<rect x="8" y="581" width="912" height="15" fill="url(#hg)"/>
<rect x="8.5" y="596" width="911" height="10" fill="#87cdf8"/>
<rect x="8.5" y="606" width="911" height="11.5" fill="#ffff00"/>
<line x1="25.8" y1="582" x2="25.8" y2="617" stroke="#e8eef2" stroke-width="1"/>
<line x1="107.1" y1="582" x2="107.1" y2="617" stroke="#e8eef2" stroke-width="1"/>
<line x1="188.4" y1="582" x2="188.4" y2="617" stroke="#e8eef2" stroke-width="1"/>
<line x1="269.7" y1="582" x2="269.7" y2="617" stroke="#e8eef2" stroke-width="1"/>
<line x1="351.0" y1="582" x2="351.0" y2="617" stroke="#e8eef2" stroke-width="1"/>
<line x1="432.3" y1="582" x2="432.3" y2="617" stroke="#e8eef2" stroke-width="1"/>
<line x1="513.6" y1="582" x2="513.6" y2="617" stroke="#e8eef2" stroke-width="1"/>
<line x1="594.9" y1="582" x2="594.9" y2="617" stroke="#e8eef2" stroke-width="1"/>
<line x1="676.2" y1="582" x2="676.2" y2="617" stroke="#e8eef2" stroke-width="1"/>
<line x1="757.5" y1="582" x2="757.5" y2="617" stroke="#e8eef2" stroke-width="1"/>
<line x1="838.8" y1="582" x2="838.8" y2="617" stroke="#e8eef2" stroke-width="1"/>
<text x="9.5" y="591" fill="#303030" font-size="7.2" font-family="Liberation Sans" text-anchor="start" font-weight="normal">ch</text>
<text x="9.5" y="604" fill="#303030" font-size="7.2" font-family="Liberation Sans" text-anchor="start" font-weight="normal">A</text>
<text x="9.5" y="615" fill="#303030" font-size="7.2" font-family="Liberation Sans" text-anchor="start" font-weight="normal">B</text>
<text x="28.6" y="591" fill="#303030" font-size="7.2" font-family="Liberation Sans" text-anchor="start" font-weight="normal">Max</text>
<text x="28.6" y="604" fill="#303030" font-size="7.2" font-family="Liberation Sans" text-anchor="start" font-weight="normal">-7.419</text>
<text x="28.6" y="615" fill="#303030" font-size="7.2" font-family="Liberation Sans" text-anchor="start" font-weight="normal">-7.308</text>
<text x="109.9" y="591" fill="#303030" font-size="7.2" font-family="Liberation Sans" text-anchor="start" font-weight="normal">Min</text>
<text x="109.9" y="604" fill="#303030" font-size="7.2" font-family="Liberation Sans" text-anchor="start" font-weight="normal">6.699</text>
<text x="109.9" y="615" fill="#303030" font-size="7.2" font-family="Liberation Sans" text-anchor="start" font-weight="normal">6.810</text>
<text x="191.2" y="591" fill="#303030" font-size="7.2" font-family="Liberation Sans" text-anchor="start" font-weight="normal">P_P</text>
<text x="191.2" y="604" fill="#303030" font-size="7.2" font-family="Liberation Sans" text-anchor="start" font-weight="normal">0.166</text>
<text x="191.2" y="615" fill="#303030" font-size="7.2" font-family="Liberation Sans" text-anchor="start" font-weight="normal">0.000</text>
<text x="272.5" y="591" fill="#303030" font-size="7.2" font-family="Liberation Sans" text-anchor="start" font-weight="normal">Frequency</text>
<text x="272.5" y="604" fill="#303030" font-size="7.2" font-family="Liberation Sans" text-anchor="start" font-weight="normal">0.000</text>
<text x="272.5" y="615" fill="#303030" font-size="7.2" font-family="Liberation Sans" text-anchor="start" font-weight="normal">0.000</text>
<text x="353.8" y="591" fill="#303030" font-size="7.2" font-family="Liberation Sans" text-anchor="start" font-weight="normal">Average</text>
<text x="353.8" y="604" fill="#303030" font-size="7.2" font-family="Liberation Sans" text-anchor="start" font-weight="normal">2.104</text>
<text x="353.8" y="615" fill="#303030" font-size="7.2" font-family="Liberation Sans" text-anchor="start" font-weight="normal">-7.308</text>
<text x="435.1" y="591" fill="#303030" font-size="7.2" font-family="Liberation Sans" text-anchor="start" font-weight="normal">Period</text>
<text x="435.1" y="604" fill="#303030" font-size="7.2" font-family="Liberation Sans" text-anchor="start" font-weight="normal">0.000</text>
<text x="435.1" y="615" fill="#303030" font-size="7.2" font-family="Liberation Sans" text-anchor="start" font-weight="normal">0.000</text>
<text x="516.4" y="591" fill="#303030" font-size="7.2" font-family="Liberation Sans" text-anchor="start" font-weight="normal">+Width</text>
<text x="516.4" y="604" fill="#303030" font-size="7.2" font-family="Liberation Sans" text-anchor="start" font-weight="normal">0.000</text>
<text x="516.4" y="615" fill="#303030" font-size="7.2" font-family="Liberation Sans" text-anchor="start" font-weight="normal">0.000</text>
<text x="597.7" y="591" fill="#303030" font-size="7.2" font-family="Liberation Sans" text-anchor="start" font-weight="normal">-Wideth</text>
<text x="597.7" y="604" fill="#303030" font-size="7.2" font-family="Liberation Sans" text-anchor="start" font-weight="normal">0.000</text>
<text x="597.7" y="615" fill="#303030" font-size="7.2" font-family="Liberation Sans" text-anchor="start" font-weight="normal">0.000</text>
<text x="679.0" y="591" fill="#303030" font-size="7.2" font-family="Liberation Sans" text-anchor="start" font-weight="normal">Duty rate</text>
<text x="679.0" y="604" fill="#303030" font-size="7.2" font-family="Liberation Sans" text-anchor="start" font-weight="normal">0.000</text>
<text x="679.0" y="615" fill="#303030" font-size="7.2" font-family="Liberation Sans" text-anchor="start" font-weight="normal">0.000</text>
<text x="760.3" y="591" fill="#303030" font-size="7.2" font-family="Liberation Sans" text-anchor="start" font-weight="normal">Rise Time</text>
<text x="760.3" y="604" fill="#303030" font-size="7.2" font-family="Liberation Sans" text-anchor="start" font-weight="normal">0.000</text>
<text x="760.3" y="615" fill="#303030" font-size="7.2" font-family="Liberation Sans" text-anchor="start" font-weight="normal">0.000</text>
<text x="841.6" y="591" fill="#303030" font-size="7.2" font-family="Liberation Sans" text-anchor="start" font-weight="normal">Vrms</text>
<text x="841.6" y="604" fill="#303030" font-size="7.2" font-family="Liberation Sans" text-anchor="start" font-weight="normal">0.059</text>
<text x="841.6" y="615" fill="#303030" font-size="7.2" font-family="Liberation Sans" text-anchor="start" font-weight="normal">0.000</text>
<rect x="898" y="51" width="27" height="510" fill="#ffffff"/>
<line x1="903.5" y1="56" x2="917" y2="56" stroke="#909090" stroke-width="0.8" stroke-dasharray="1 1.2"/>
<g stroke="#202020" stroke-width="1.3" fill="none"><path d="M901.5,66 v-3.5 h3.5 M914.5,62.5 h3.5 v3.5 M901.5,73.5 v3.5 h3.5 M914.5,77 h3.5 v-3.5"/><path d="M904,65 L915,75 M915,65 L904,75" stroke-width="1"/></g>
<g fill="#101010"><polygon points="903,64 907.5,65 904,68.5"/><polygon points="916.5,64 912,65 915.5,68.5"/><polygon points="903,76 907.5,75 904,71.5"/><polygon points="916.5,76 912,75 915.5,71.5"/></g>
<line x1="911" y1="93" x2="917.5" y2="99.5" stroke="#402010" stroke-width="3" stroke-linecap="round"/>
<line x1="911" y1="93" x2="914" y2="96" stroke="#e08030" stroke-width="2.2"/>
<circle cx="906.6" cy="88.7" r="6" fill="#a8d4f4" stroke="#304050" stroke-width="1.2"/>
<path d="M903.6,88.7 h6 M906.6,85.7 v6" stroke="#203040" stroke-width="1.1"/>
<path d="M900,105 L900,122 L917.5,122 Z M902.5,111 L902.5,119.5 L911,119.5 Z" fill="#70c8b8" fill-rule="evenodd"/>
<g stroke="#8890d0" stroke-width="1.1"><line x1="900.5" y1="127.8" x2="919.5" y2="127.8"/><line x1="900.5" y1="141.2" x2="919.5" y2="141.2"/><line x1="903.2" y1="125" x2="903.2" y2="143.5"/><line x1="917.1" y1="125" x2="917.1" y2="143.5"/></g>
<g fill="#e8e890"><rect x="909.3" y="130.5" width="1.4" height="1.4"/><rect x="909.3" y="133.8" width="1.4" height="1.4"/><rect x="909.3" y="137.2" width="1.4" height="1.4"/><rect x="906" y="133.8" width="1.4" height="1.4"/><rect x="912.6" y="133.8" width="1.4" height="1.4"/></g>
<g stroke="#101010" stroke-width="1.4"><line x1="901.5" y1="149" x2="901.5" y2="164"/><line x1="917" y1="149" x2="917" y2="164"/></g>
<line x1="904" y1="155.8" x2="915" y2="155.8" stroke="#909090" stroke-width="1"/>
<g fill="#101010"><polygon points="902.5,155.8 906.5,153.5 906.5,158.1"/><polygon points="916,155.8 912,153.5 912,158.1"/></g>
<g stroke="#202020" stroke-width="1.4"><line x1="907.1" y1="170.5" x2="907.1" y2="186"/><line x1="911.6" y1="170.5" x2="911.6" y2="186"/></g>
<g fill="#101010"><polygon points="906,177.8 901.5,175.5 901.5,180.1"/><polygon points="912.7,177.8 917.2,175.5 917.2,180.1"/></g>
<path d="M900.5,191.5 V208.8 H918.5" fill="none" stroke="#b0b0b0" stroke-width="0.7"/>
<path d="M901.5,208.5 C902.5,198 903.5,194.5 905,194.5 C906.5,194.5 907,200 908.5,208.5Z" fill="#f8c840"/>
<path d="M905.5,208.5 C907,204 908.5,199.5 910,199.5 C911.5,199.5 912,204 913,208.5Z" fill="#f08030"/>
<path d="M911.5,208.5 C912.5,198 913,194.5 914.8,194.5 C916.5,194.5 917,199 918,208.5Z" fill="#8040b0"/>
<g fill="#101010"><rect x="900.4" y="212" width="7.3" height="8.8"/><rect x="909.9" y="212" width="9.4" height="8.8"/><rect x="900.4" y="222" width="7.3" height="8.8"/><rect x="909.9" y="222" width="9.4" height="8.8"/></g>
<g stroke="#ffffff" stroke-width="1.4"><line x1="902" y1="216.4" x2="906" y2="216.4"/><line x1="911.8" y1="216.4" x2="917.4" y2="216.4"/><line x1="914.6" y1="213.8" x2="914.6" y2="219"/><line x1="902" y1="224" x2="906" y2="228.8"/><line x1="906" y1="224" x2="902" y2="228.8"/><line x1="912" y1="224.8" x2="917.2" y2="224.8"/><line x1="912" y1="228" x2="917.2" y2="228"/></g>
<path d="M902.2,235.2 H916.5 L918.8,237.5 V253 H902.2Z" fill="#6a98c0"/>
<rect x="904.8" y="236" width="11.5" height="8.2" fill="#dcecf8"/>
<rect x="905.5" y="247" width="9.5" height="6" fill="#e8f0f8"/>
<rect x="907" y="248.5" width="2.2" height="4.5" fill="#6a98c0"/>
<rect x="900.8" y="259" width="17" height="13" fill="none" stroke="#909090" stroke-width="0.5"/>
<rect x="902.5" y="260.5" width="14" height="8" fill="#38bce0"/>
<path d="M902.5,268.5 L906.5,263.5 L909.5,266 L912.5,262 L916.5,268.5Z" fill="#e8f8ff"/>
<rect x="903" y="269.6" width="13" height="1" fill="#6080a0"/>
<g fill="#303030"><circle cx="900.8" cy="259" r="1.2"/><circle cx="917.8" cy="259" r="1.2"/><circle cx="900.8" cy="272" r="1.2"/><circle cx="917.8" cy="272" r="1.2"/></g>
<rect x="900.8" y="279.6" width="17.6" height="14.8" fill="#ffffff" stroke="#303030" stroke-width="1"/>
<g stroke="#d8d8d8" stroke-width="0.5"><line x1="901" y1="283" x2="918" y2="283"/><line x1="901" y1="287" x2="918" y2="287"/><line x1="901" y1="291" x2="918" y2="291"/><line x1="905" y1="280" x2="905" y2="294"/><line x1="909.5" y1="280" x2="909.5" y2="294"/><line x1="914" y1="280" x2="914" y2="294"/></g>
<path d="M901.5,289 L902,286 C902.5,283.8 904.5,283.8 905,286 L905.5,289 C906,291.2 908,291.2 908.5,289 L909,286 C909.5,283.8 911.5,283.8 912,286 L912.5,289 C913,291.2 915,291.2 915.5,289 L916,286 C916.5,283.8 918,284 918.2,285" fill="none" stroke="#404040" stroke-width="1.1"/>
<g stroke="#7a8288" stroke-width="1"><line x1="900" y1="302" x2="918.5" y2="302"/><line x1="900" y1="306.5" x2="918.5" y2="306.5"/><line x1="900" y1="311" x2="918.5" y2="311"/><line x1="900" y1="315" x2="918.5" y2="315"/><line x1="901.5" y1="301" x2="901.5" y2="316"/><line x1="907.5" y1="301" x2="907.5" y2="316"/><line x1="912.5" y1="301" x2="912.5" y2="316"/><line x1="917.2" y1="301" x2="917.2" y2="316"/></g>
<defs><linearGradient id="wub" x1="0" y1="0" x2="0" y2="1"><stop offset="0" stop-color="#8cbcec"/><stop offset="0.5" stop-color="#5a98dc"/><stop offset="1" stop-color="#3a74c4"/></linearGradient></defs>
<rect x="734.5" y="36.2" width="189" height="12.3" rx="6.1" fill="url(#wub)"/>
<circle cx="741.4" cy="42.3" r="5.6" fill="#1c2438"/>
<polygon points="739.6,40 739.6,44.6 743.6,42.3" fill="#ffffff"/>
<text x="779" y="45.6" fill="#e4eef8" font-size="8.5" font-family="Liberation Sans" text-anchor="start" font-weight="normal" textLength="96.5" lengthAdjust="spacingAndGlyphs">WinUsb Device&#160; is available.</text>
<rect x="75.6" y="646" width="32.7" height="2" fill="#dce6f0"/>
<rect x="114.6" y="646" width="36.4" height="2" fill="#dce6f0"/>
<rect x="153" y="646" width="34.7" height="2" fill="#dce6f0"/>
<rect x="191.4" y="646" width="73.1" height="2" fill="#dce6f0"/>
<rect x="268" y="646" width="35.0" height="2" fill="#dce6f0"/>
<rect x="306.3" y="646" width="35.3" height="2" fill="#dce6f0"/>
<rect x="345" y="646" width="36.6" height="2" fill="#dce6f0"/>
<rect x="384" y="646" width="35.0" height="2" fill="#dce6f0"/>
<rect x="422" y="646" width="36.0" height="2" fill="#dce6f0"/>
<rect x="461" y="646" width="33.0" height="2" fill="#dce6f0"/>
<rect x="498" y="646" width="37.0" height="2" fill="#dce6f0"/>
<text x="6" y="640.5" fill="#222" font-size="8.5" font-family="Liberation Sans" text-anchor="start" font-weight="normal" textLength="13" lengthAdjust="spacingAndGlyphs">Live</text>
<defs><filter id="bl" x="-50%" y="-50%" width="200%" height="200%"><feGaussianBlur stdDeviation="2"/></filter><linearGradient id="tb" x1="0" y1="0" x2="1" y2="0"><stop offset="0" stop-color="#3a70b8"/><stop offset="0.1" stop-color="#1a5cb4"/><stop offset="0.35" stop-color="#1c62b8"/><stop offset="0.6" stop-color="#1858a8"/><stop offset="0.76" stop-color="#12509a"/><stop offset="0.9" stop-color="#1e5594"/><stop offset="1" stop-color="#2a5e98"/></linearGradient></defs>
<rect x="0" y="0" width="1192" height="14" fill="url(#tb)"/>
<rect x="0" y="12.8" width="1192" height="1.2" fill="#5a88c0" opacity="0.8"/>
<g filter="url(#bl)">
<rect x="14" y="3" width="90" height="10" rx="5" fill="#a0b8d8" opacity="0.55"/>
<rect x="108" y="7" width="20" height="8" fill="#c08868" opacity="0.7"/>
<rect x="154" y="5" width="14" height="9" fill="#e8f0e8" opacity="0.85"/>
<rect x="531" y="4" width="22" height="10" fill="#b8d0ec" opacity="0.8"/>
<rect x="578" y="4" width="22" height="10" fill="#b8d0ec" opacity="0.8"/>
<rect x="624" y="4" width="24" height="10" fill="#b8d0ec" opacity="0.8"/>
<rect x="671" y="4" width="24" height="10" fill="#b8d0ec" opacity="0.8"/>
<rect x="718" y="4" width="24" height="10" fill="#b8d0ec" opacity="0.8"/>
<ellipse cx="1060" cy="12" rx="9" ry="5" fill="#f0f8ff" opacity="0.9"/>
<rect x="2" y="3" width="5" height="6" fill="#60a0f0"/><rect x="7" y="8" width="4" height="5" fill="#e06030"/>
</g>
<text x="19" y="10.5" fill="#1a2848" font-size="8.5" font-family="Liberation Sans" text-anchor="start" font-weight="normal" textLength="79" lengthAdjust="spacingAndGlyphs">OSC802&#160; Version 2.0.2</text>
<rect x="1126.5" y="-1" width="62" height="12" rx="2" fill="none" stroke="#7aa0d0" stroke-width="0.8" opacity="0.8"/>
<line x1="1143.8" y1="0" x2="1143.8" y2="11" stroke="#7aa0d0" stroke-width="0.8"/><line x1="1161" y1="0" x2="1161" y2="11" stroke="#7aa0d0" stroke-width="0.8"/>
<rect x="1131.5" y="5.5" width="6" height="1.6" fill="#ffffff"/>
<rect x="1150.5" y="3" width="5" height="5" fill="none" stroke="#ffffff" stroke-width="1"/><rect x="1148.5" y="4.5" width="5" height="4.5" fill="#2a66bd" stroke="#ffffff" stroke-width="1"/>
<path d="M1172,2.5 L1177,8 M1177,2.5 L1172,8" stroke="#ffffff" stroke-width="1.5"/>
</svg>
<svg class="a" style="left:0;top:0" width="1192" height="648">
<defs>
<radialGradient id="ringT" cx="0.5" cy="0.35" r="0.65"><stop offset="0.7" stop-color="#d4d4d4"/><stop offset="1" stop-color="#b8b8b8"/></radialGradient>
<linearGradient id="ringTl" x1="0.2" y1="0" x2="0.6" y2="1"><stop offset="0" stop-color="#cacaca"/><stop offset="0.5" stop-color="#c2c2c2"/><stop offset="1" stop-color="#d4d4d4"/></linearGradient>
<linearGradient id="faceTop" x1="0" y1="0.3" x2="0.7" y2="0.1"><stop offset="0" stop-color="#cfcfcf"/><stop offset="0.5" stop-color="#f2f2f2"/><stop offset="1" stop-color="#fafafa"/></linearGradient>
<linearGradient id="faceBot" x1="0.3" y1="0.4" x2="0.7" y2="1"><stop offset="0" stop-color="#bdbdbd"/><stop offset="1" stop-color="#d6d6d6"/></linearGradient>
<linearGradient id="band" x1="0" y1="0" x2="0" y2="1"><stop offset="0" stop-color="#f2f2f2"/><stop offset="1" stop-color="#dedede"/></linearGradient>
<radialGradient id="vring" cx="0.5" cy="0.4" r="0.6"><stop offset="0.55" stop-color="#d0d0d0"/><stop offset="0.8" stop-color="#b0b0b0"/><stop offset="1" stop-color="#a0a0a0"/></radialGradient>
<linearGradient id="vouter" x1="0" y1="0" x2="0" y2="1"><stop offset="0" stop-color="#b4b4b4"/><stop offset="0.6" stop-color="#a8a8a8"/><stop offset="1" stop-color="#8c8c8c"/></linearGradient>
<linearGradient id="vknurl" x1="0" y1="0" x2="0" y2="1"><stop offset="0" stop-color="#d4d4d4"/><stop offset="0.5" stop-color="#b8b8b8"/><stop offset="1" stop-color="#8a8a8a"/></linearGradient>
<radialGradient id="dot" cx="0.4" cy="0.35" r="0.7"><stop offset="0" stop-color="#9a9a9a"/><stop offset="1" stop-color="#505050"/></radialGradient>
<radialGradient id="metal" cx="0.5" cy="0.5" r="0.5"><stop offset="0" stop-color="#f0f0f0"/><stop offset="0.6" stop-color="#b8b8b8"/><stop offset="0.85" stop-color="#d8d8d8"/><stop offset="1" stop-color="#909090"/></radialGradient>
<linearGradient id="supp" x1="0" y1="0" x2="0" y2="1"><stop offset="0" stop-color="#e03030"/><stop offset="0.5" stop-color="#c80c14"/><stop offset="1" stop-color="#a00008"/></linearGradient>
<linearGradient id="stopb" x1="0" y1="0" x2="0" y2="1"><stop offset="0" stop-color="#e8e8e8"/><stop offset="0.5" stop-color="#cfcfcf"/><stop offset="1" stop-color="#a8a8a8"/></linearGradient>
<linearGradient id="combo" x1="0" y1="0" x2="0" y2="1"><stop offset="0" stop-color="#f6f6f6"/><stop offset="1" stop-color="#dedede"/></linearGradient>
<linearGradient id="green" x1="0" y1="0" x2="0" y2="1"><stop offset="0" stop-color="#50e050"/><stop offset="0.3" stop-color="#10c020"/><stop offset="1" stop-color="#08a018"/></linearGradient>
<linearGradient id="tan" x1="0" y1="0" x2="0" y2="1"><stop offset="0" stop-color="#f0d8a0"/><stop offset="1" stop-color="#d8b070"/></linearGradient>
<radialGradient id="wcirc" cx="0.45" cy="0.4" r="0.6"><stop offset="0" stop-color="#ffffff"/><stop offset="0.8" stop-color="#e4e4ea"/><stop offset="1" stop-color="#b8b8c0"/></radialGradient>
<filter id="sh" x="-20%" y="-20%" width="140%" height="140%"><feGaussianBlur stdDeviation="2"/></filter>
</defs>
<circle cx="999" cy="102.5" r="50" fill="#000" opacity="0.12" filter="url(#sh)"/>
<circle cx="999" cy="100.5" r="49" fill="url(#ringTl)"/>
<path d="M1027.51,61.26 A48.5,48.5 0 0 1 1047.47,98.81 L1037.98,99.14 A39,39 0 0 0 1021.92,68.95Z" fill="#1a1a1a"/>
<path d="M1028.89,64.88 A46.5,46.5 0 0 1 1045.39,97.26 L1044.39,97.33 A45.5,45.5 0 0 0 1028.25,65.64Z" fill="#707070"/>
<clipPath id="fc"><circle cx="998.5" cy="100.5" r="38.5"/></clipPath>
<g clip-path="url(#fc)">
<rect x="959" y="60.5" width="80" height="80" fill="url(#faceTop)"/>
<g transform="rotate(-27.5 999 100.5)">
<rect x="939" y="108.0" width="120" height="60" fill="url(#faceBot)"/>
<rect x="939" y="91.5" width="120" height="16.5" fill="url(#band)"/>
<rect x="939" y="91.0" width="120" height="1" fill="#ffffff" opacity="0.9"/>
<rect x="939" y="107.5" width="120" height="1.2" fill="#b8b8b8" opacity="0.9"/>
<rect x="960.6" y="98.2" width="15" height="4" fill="#c81818"/>
<text x="1003" y="103.7" fill="#a08890" font-size="13.5" font-family="Liberation Sans" text-anchor="middle" textLength="33" lengthAdjust="spacingAndGlyphs">Time</text>
</g></g>
<circle cx="998.5" cy="100.5" r="38.5" fill="none" stroke="#a8a8a8" stroke-width="0.8" opacity="0.6"/>
<g transform="translate(1009.78 46.57) rotate(11.3)"><text x="0" y="3" fill="#888888" font-size="9.2" font-family="Liberation Sans" text-anchor="middle">1us</text></g>
<line x1="1008.7" y1="52.0" x2="1009.1" y2="50.0" stroke="#505050" stroke-width="1"/>
<g transform="translate(979.21 48.12) rotate(-20.7)"><text x="0" y="3" fill="#888888" font-size="9.2" font-family="Liberation Sans" text-anchor="middle">2.5us</text></g>
<line x1="981.5" y1="54.2" x2="980.8" y2="52.3" stroke="#505050" stroke-width="1"/>
<g transform="translate(953.48 66.20) rotate(-53)"><text x="0" y="3" fill="#888888" font-size="9.2" font-family="Liberation Sans" text-anchor="middle">10us</text></g>
<line x1="959.5" y1="70.7" x2="957.9" y2="69.5" stroke="#505050" stroke-width="1"/>
<g transform="translate(942.31 94.54) rotate(-84)"><text x="0" y="3" fill="#888888" font-size="9.2" font-family="Liberation Sans" text-anchor="middle">25us</text></g>
<line x1="949.8" y1="95.3" x2="947.8" y2="95.1" stroke="#505050" stroke-width="1"/>
<g transform="translate(949.33 126.36) rotate(-117.5)"><text x="0" y="3" fill="#888888" font-size="9.2" font-family="Liberation Sans" text-anchor="middle">0.1ms</text></g>
<line x1="955.1" y1="123.4" x2="953.3" y2="124.3" stroke="#505050" stroke-width="1"/>
<g transform="translate(977.12 152.05) rotate(-157)"><text x="0" y="3" fill="#888888" font-size="9.2" font-family="Liberation Sans" text-anchor="middle">0.2ms</text></g>
<line x1="979.7" y1="146.1" x2="978.9" y2="147.9" stroke="#505050" stroke-width="1"/>
<g transform="translate(1010.64 155.28) rotate(168)"><text x="0" y="3" fill="#888888" font-size="9.2" font-family="Liberation Sans" text-anchor="middle">1ms</text></g>
<line x1="1009.3" y1="148.9" x2="1009.7" y2="150.9" stroke="#505050" stroke-width="1"/>
<g transform="translate(1035.69 60.88) rotate(42.8)"><text x="0" y="3" fill="#888888" font-size="9.2" font-family="Liberation Sans" text-anchor="middle">0.2us</text></g>
<line x1="1032.6" y1="64.2" x2="1034.0" y2="62.7" stroke="#505050" stroke-width="1"/>
<rect x="1064.5" y="34.5" width="43" height="45" fill="#f5f0e8" stroke="#f4e6d0" stroke-width="1.5"/>
<rect x="1066.5" y="38.5" width="39" height="18" fill="#efefef" stroke="#d8d8d8" stroke-width="1"/>
<text x="1086" y="50.5" fill="#a8a8a8" font-size="8.5" font-family="Liberation Sans" text-anchor="middle" font-weight="normal" textLength="16" lengthAdjust="spacingAndGlyphs">auto</text>
<rect x="1066.5" y="59.5" width="39" height="18.5" fill="#f2f2f2" stroke="#b8a88c" stroke-width="1" rx="1"/>
<text x="1086" y="71.5" fill="#202020" font-size="8.5" font-family="Liberation Sans" text-anchor="middle" font-weight="normal" textLength="19" lengthAdjust="spacingAndGlyphs">reset</text>
<rect x="1050.5" y="96.5" width="38" height="13.5" rx="1.5" fill="url(#combo)" stroke="#a0a0a0" stroke-width="1"/>
<text x="1054.5" y="106.5" fill="#202020" font-size="8.5" font-family="Liberation Sans" text-anchor="start" font-weight="normal" textLength="19" lengthAdjust="spacingAndGlyphs">50ns</text>
<polygon points="1081,102.05 1085,102.05 1083,104.55" fill="#202020"/>
<rect x="1043.0" y="129.0" width="45.5" height="13.5" rx="1.5" fill="url(#combo)" stroke="#a0a0a0" stroke-width="1"/>
<text x="1047.0" y="139" fill="#202020" font-size="8.5" font-family="Liberation Sans" text-anchor="start" font-weight="normal" textLength="20" lengthAdjust="spacingAndGlyphs">20ms</text>
<polygon points="1081,134.55 1085,134.55 1083,137.05" fill="#202020"/>
<rect x="1109" y="34" width="80" height="148" fill="#a0a0a0"/>
<rect x="1109" y="181" width="80" height="1.5" fill="#7a7a7a"/><rect x="1188" y="34" width="1" height="148" fill="#8a9088"/>
<rect x="1112" y="38" width="74" height="37.5" rx="18.7" fill="#2a2a2a"/>
<text x="1152.5" y="61.5" fill="#e8e8e8" font-size="11" font-family="Liberation Sans" text-anchor="start" font-weight="normal" textLength="18.5" lengthAdjust="spacingAndGlyphs">REC</text>
<rect x="1113.5" y="83.5" width="25" height="24" fill="#f4f4f4"/>
<line x1="1119" y1="86" x2="1119" y2="105" stroke="#303030" stroke-width="1.6"/>
<rect x="1116.5" y="91.5" width="5" height="3" fill="#f08020"/>
<line x1="1126" y1="86" x2="1126" y2="105" stroke="#303030" stroke-width="1.6"/>
<rect x="1123.5" y="99.5" width="5" height="3" fill="#3090d8"/>
<line x1="1133" y1="86" x2="1133" y2="105" stroke="#303030" stroke-width="1.6"/>
<rect x="1130.5" y="93.5" width="5" height="3" fill="#f0b020"/>
<path d="M1147,84.5 h9 l2,2 h14 v20.5 h-25z" fill="#e8b838"/>
<rect x="1151" y="88" width="21" height="8" fill="#fafafa"/>
<path d="M1152,90 h19 M1152,92 h19" stroke="#d8d8d8" stroke-width="0.5"/>
<path d="M1149,94.5 h26.5 l-2.5,13 h-26z" fill="#f4d058"/>
<text x="1114.5" y="127" fill="#ffffff" font-size="12" font-family="Liberation Sans" text-anchor="start" font-weight="bold" textLength="6.5" lengthAdjust="spacingAndGlyphs">0</text>
<rect x="1146.5" y="116" width="31" height="17" fill="#d8e8f8"/>
<text x="1161.2" y="127.2" fill="#404850" font-size="11.5" font-family="Liberation Sans" text-anchor="middle" font-weight="bold" textLength="6" lengthAdjust="spacingAndGlyphs">0</text>
<rect x="1177.5" y="116.5" width="9.5" height="16" fill="#e4eaf0" stroke="#d0d4d8" stroke-width="0.6"/>
<path d="M1181,121 l1.2,-1.5 l1.2,1.5 M1181,128 l1.2,1.5 l1.2,-1.5" fill="none" stroke="#808080" stroke-width="0.6"/>
<line x1="1177.5" y1="124.5" x2="1187" y2="124.5" stroke="#c0c0c0" stroke-width="0.6"/>
<rect x="1111" y="139.5" width="76" height="21" fill="#f8f8f8" stroke="#d8d8d8" stroke-width="0.6"/>
<rect x="1143" y="146" width="3.2" height="8.5" fill="#101010"/>
<polygon points="1147.5,145.5 1156,150.2 1147.5,155" fill="#101010"/>
<rect x="1111" y="164" width="61" height="16" fill="#8a8a8a"/>
<rect x="1112" y="165" width="59" height="14" fill="#c8c8c8"/>
<rect x="1112" y="165" width="29" height="14" fill="url(#green)"/>
<rect x="1175" y="166" width="12" height="12" fill="#e8e8e8"/>
<rect x="1177" y="168" width="8" height="8" fill="#707070"/>
<path d="M938.8,221.8 A60.8,60.8 0 0 1 1060.2,222.8" fill="none" stroke="#40a8e0" stroke-width="3"/>
<circle cx="999.5" cy="228" r="50" fill="#000" opacity="0.18" filter="url(#sh)"/>
<circle cx="999.5" cy="226" r="48" fill="url(#vouter)"/>
<circle cx="999.5" cy="226" r="43" fill="url(#vknurl)"/>
<line x1="1035.5" y1="226.0" x2="1041.5" y2="226.0" stroke="#808080" stroke-width="0.7" opacity="0.35"/>
<line x1="1035.4" y1="228.5" x2="1041.4" y2="228.9" stroke="#808080" stroke-width="0.7" opacity="0.35"/>
<line x1="1035.1" y1="231.0" x2="1041.1" y2="231.8" stroke="#808080" stroke-width="0.7" opacity="0.35"/>
<line x1="1034.7" y1="233.5" x2="1040.6" y2="234.7" stroke="#808080" stroke-width="0.7" opacity="0.35"/>
<line x1="1034.1" y1="235.9" x2="1039.9" y2="237.6" stroke="#808080" stroke-width="0.7" opacity="0.35"/>
<line x1="1033.3" y1="238.3" x2="1039.0" y2="240.4" stroke="#808080" stroke-width="0.7" opacity="0.35"/>
<line x1="1032.4" y1="240.6" x2="1037.9" y2="243.1" stroke="#808080" stroke-width="0.7" opacity="0.35"/>
<line x1="1031.3" y1="242.9" x2="1036.6" y2="245.7" stroke="#808080" stroke-width="0.7" opacity="0.35"/>
<line x1="1030.0" y1="245.1" x2="1035.1" y2="248.3" stroke="#808080" stroke-width="0.7" opacity="0.35"/>
<line x1="1028.6" y1="247.2" x2="1033.5" y2="250.7" stroke="#808080" stroke-width="0.7" opacity="0.35"/>
<line x1="1027.1" y1="249.1" x2="1031.7" y2="253.0" stroke="#808080" stroke-width="0.7" opacity="0.35"/>
<line x1="1025.4" y1="251.0" x2="1029.7" y2="255.2" stroke="#808080" stroke-width="0.7" opacity="0.35"/>
<line x1="1023.6" y1="252.8" x2="1027.6" y2="257.2" stroke="#808080" stroke-width="0.7" opacity="0.35"/>
<line x1="1021.7" y1="254.4" x2="1025.4" y2="259.1" stroke="#808080" stroke-width="0.7" opacity="0.35"/>
<line x1="1019.6" y1="255.8" x2="1023.0" y2="260.8" stroke="#808080" stroke-width="0.7" opacity="0.35"/>
<line x1="1017.5" y1="257.2" x2="1020.5" y2="262.4" stroke="#808080" stroke-width="0.7" opacity="0.35"/>
<line x1="1015.3" y1="258.4" x2="1017.9" y2="263.7" stroke="#808080" stroke-width="0.7" opacity="0.35"/>
<line x1="1013.0" y1="259.4" x2="1015.2" y2="264.9" stroke="#808080" stroke-width="0.7" opacity="0.35"/>
<line x1="1010.6" y1="260.2" x2="1012.5" y2="265.9" stroke="#808080" stroke-width="0.7" opacity="0.35"/>
<line x1="1008.2" y1="260.9" x2="1009.7" y2="266.8" stroke="#808080" stroke-width="0.7" opacity="0.35"/>
<line x1="1005.8" y1="261.5" x2="1006.8" y2="267.4" stroke="#808080" stroke-width="0.7" opacity="0.35"/>
<line x1="1003.3" y1="261.8" x2="1003.9" y2="267.8" stroke="#808080" stroke-width="0.7" opacity="0.35"/>
<line x1="1000.8" y1="262.0" x2="1001.0" y2="268.0" stroke="#808080" stroke-width="0.7" opacity="0.35"/>
<line x1="998.2" y1="262.0" x2="998.0" y2="268.0" stroke="#808080" stroke-width="0.7" opacity="0.35"/>
<line x1="995.7" y1="261.8" x2="995.1" y2="267.8" stroke="#808080" stroke-width="0.7" opacity="0.35"/>
<line x1="993.2" y1="261.5" x2="992.2" y2="267.4" stroke="#808080" stroke-width="0.7" opacity="0.35"/>
<line x1="990.8" y1="260.9" x2="989.3" y2="266.8" stroke="#808080" stroke-width="0.7" opacity="0.35"/>
<line x1="988.4" y1="260.2" x2="986.5" y2="265.9" stroke="#808080" stroke-width="0.7" opacity="0.35"/>
<line x1="986.0" y1="259.4" x2="983.8" y2="264.9" stroke="#808080" stroke-width="0.7" opacity="0.35"/>
<line x1="983.7" y1="258.4" x2="981.1" y2="263.7" stroke="#808080" stroke-width="0.7" opacity="0.35"/>
<line x1="981.5" y1="257.2" x2="978.5" y2="262.4" stroke="#808080" stroke-width="0.7" opacity="0.35"/>
<line x1="979.4" y1="255.8" x2="976.0" y2="260.8" stroke="#808080" stroke-width="0.7" opacity="0.35"/>
<line x1="977.3" y1="254.4" x2="973.6" y2="259.1" stroke="#808080" stroke-width="0.7" opacity="0.35"/>
<line x1="975.4" y1="252.8" x2="971.4" y2="257.2" stroke="#808080" stroke-width="0.7" opacity="0.35"/>
<line x1="973.6" y1="251.0" x2="969.3" y2="255.2" stroke="#808080" stroke-width="0.7" opacity="0.35"/>
<line x1="971.9" y1="249.1" x2="967.3" y2="253.0" stroke="#808080" stroke-width="0.7" opacity="0.35"/>
<line x1="970.4" y1="247.2" x2="965.5" y2="250.7" stroke="#808080" stroke-width="0.7" opacity="0.35"/>
<line x1="969.0" y1="245.1" x2="963.9" y2="248.3" stroke="#808080" stroke-width="0.7" opacity="0.35"/>
<line x1="967.7" y1="242.9" x2="962.4" y2="245.7" stroke="#808080" stroke-width="0.7" opacity="0.35"/>
<line x1="966.6" y1="240.6" x2="961.1" y2="243.1" stroke="#808080" stroke-width="0.7" opacity="0.35"/>
<line x1="965.7" y1="238.3" x2="960.0" y2="240.4" stroke="#808080" stroke-width="0.7" opacity="0.35"/>
<line x1="964.9" y1="235.9" x2="959.1" y2="237.6" stroke="#808080" stroke-width="0.7" opacity="0.35"/>
<line x1="964.3" y1="233.5" x2="958.4" y2="234.7" stroke="#808080" stroke-width="0.7" opacity="0.35"/>
<line x1="963.9" y1="231.0" x2="957.9" y2="231.8" stroke="#808080" stroke-width="0.7" opacity="0.35"/>
<line x1="963.6" y1="228.5" x2="957.6" y2="228.9" stroke="#808080" stroke-width="0.7" opacity="0.35"/>
<line x1="963.5" y1="226.0" x2="957.5" y2="226.0" stroke="#808080" stroke-width="0.7" opacity="0.35"/>
<line x1="963.6" y1="223.5" x2="957.6" y2="223.1" stroke="#808080" stroke-width="0.7" opacity="0.35"/>
<line x1="963.9" y1="221.0" x2="957.9" y2="220.2" stroke="#808080" stroke-width="0.7" opacity="0.35"/>
<line x1="964.3" y1="218.5" x2="958.4" y2="217.3" stroke="#808080" stroke-width="0.7" opacity="0.35"/>
<line x1="964.9" y1="216.1" x2="959.1" y2="214.4" stroke="#808080" stroke-width="0.7" opacity="0.35"/>
<line x1="965.7" y1="213.7" x2="960.0" y2="211.6" stroke="#808080" stroke-width="0.7" opacity="0.35"/>
<line x1="966.6" y1="211.4" x2="961.1" y2="208.9" stroke="#808080" stroke-width="0.7" opacity="0.35"/>
<line x1="967.7" y1="209.1" x2="962.4" y2="206.3" stroke="#808080" stroke-width="0.7" opacity="0.35"/>
<line x1="969.0" y1="206.9" x2="963.9" y2="203.7" stroke="#808080" stroke-width="0.7" opacity="0.35"/>
<line x1="970.4" y1="204.8" x2="965.5" y2="201.3" stroke="#808080" stroke-width="0.7" opacity="0.35"/>
<line x1="971.9" y1="202.9" x2="967.3" y2="199.0" stroke="#808080" stroke-width="0.7" opacity="0.35"/>
<line x1="973.6" y1="201.0" x2="969.3" y2="196.8" stroke="#808080" stroke-width="0.7" opacity="0.35"/>
<line x1="975.4" y1="199.2" x2="971.4" y2="194.8" stroke="#808080" stroke-width="0.7" opacity="0.35"/>
<line x1="977.3" y1="197.6" x2="973.6" y2="192.9" stroke="#808080" stroke-width="0.7" opacity="0.35"/>
<line x1="979.4" y1="196.2" x2="976.0" y2="191.2" stroke="#808080" stroke-width="0.7" opacity="0.35"/>
<line x1="981.5" y1="194.8" x2="978.5" y2="189.6" stroke="#808080" stroke-width="0.7" opacity="0.35"/>
<line x1="983.7" y1="193.6" x2="981.1" y2="188.3" stroke="#808080" stroke-width="0.7" opacity="0.35"/>
<line x1="986.0" y1="192.6" x2="983.8" y2="187.1" stroke="#808080" stroke-width="0.7" opacity="0.35"/>
<line x1="988.4" y1="191.8" x2="986.5" y2="186.1" stroke="#808080" stroke-width="0.7" opacity="0.35"/>
<line x1="990.8" y1="191.1" x2="989.3" y2="185.2" stroke="#808080" stroke-width="0.7" opacity="0.35"/>
<line x1="993.2" y1="190.5" x2="992.2" y2="184.6" stroke="#808080" stroke-width="0.7" opacity="0.35"/>
<line x1="995.7" y1="190.2" x2="995.1" y2="184.2" stroke="#808080" stroke-width="0.7" opacity="0.35"/>
<line x1="998.2" y1="190.0" x2="998.0" y2="184.0" stroke="#808080" stroke-width="0.7" opacity="0.35"/>
<line x1="1000.8" y1="190.0" x2="1001.0" y2="184.0" stroke="#808080" stroke-width="0.7" opacity="0.35"/>
<line x1="1003.3" y1="190.2" x2="1003.9" y2="184.2" stroke="#808080" stroke-width="0.7" opacity="0.35"/>
<line x1="1005.8" y1="190.5" x2="1006.8" y2="184.6" stroke="#808080" stroke-width="0.7" opacity="0.35"/>
<line x1="1008.2" y1="191.1" x2="1009.7" y2="185.2" stroke="#808080" stroke-width="0.7" opacity="0.35"/>
<line x1="1010.6" y1="191.8" x2="1012.5" y2="186.1" stroke="#808080" stroke-width="0.7" opacity="0.35"/>
<line x1="1013.0" y1="192.6" x2="1015.2" y2="187.1" stroke="#808080" stroke-width="0.7" opacity="0.35"/>
<line x1="1015.3" y1="193.6" x2="1017.9" y2="188.3" stroke="#808080" stroke-width="0.7" opacity="0.35"/>
<line x1="1017.5" y1="194.8" x2="1020.5" y2="189.6" stroke="#808080" stroke-width="0.7" opacity="0.35"/>
<line x1="1019.6" y1="196.2" x2="1023.0" y2="191.2" stroke="#808080" stroke-width="0.7" opacity="0.35"/>
<line x1="1021.7" y1="197.6" x2="1025.4" y2="192.9" stroke="#808080" stroke-width="0.7" opacity="0.35"/>
<line x1="1023.6" y1="199.2" x2="1027.6" y2="194.8" stroke="#808080" stroke-width="0.7" opacity="0.35"/>
<line x1="1025.4" y1="201.0" x2="1029.7" y2="196.8" stroke="#808080" stroke-width="0.7" opacity="0.35"/>
<line x1="1027.1" y1="202.9" x2="1031.7" y2="199.0" stroke="#808080" stroke-width="0.7" opacity="0.35"/>
<line x1="1028.6" y1="204.8" x2="1033.5" y2="201.3" stroke="#808080" stroke-width="0.7" opacity="0.35"/>
<line x1="1030.0" y1="206.9" x2="1035.1" y2="203.7" stroke="#808080" stroke-width="0.7" opacity="0.35"/>
<line x1="1031.3" y1="209.1" x2="1036.6" y2="206.3" stroke="#808080" stroke-width="0.7" opacity="0.35"/>
<line x1="1032.4" y1="211.4" x2="1037.9" y2="208.9" stroke="#808080" stroke-width="0.7" opacity="0.35"/>
<line x1="1033.3" y1="213.7" x2="1039.0" y2="211.6" stroke="#808080" stroke-width="0.7" opacity="0.35"/>
<line x1="1034.1" y1="216.1" x2="1039.9" y2="214.4" stroke="#808080" stroke-width="0.7" opacity="0.35"/>
<line x1="1034.7" y1="218.5" x2="1040.6" y2="217.3" stroke="#808080" stroke-width="0.7" opacity="0.35"/>
<line x1="1035.1" y1="221.0" x2="1041.1" y2="220.2" stroke="#808080" stroke-width="0.7" opacity="0.35"/>
<line x1="1035.4" y1="223.5" x2="1041.4" y2="223.1" stroke="#808080" stroke-width="0.7" opacity="0.35"/>
<circle cx="999.5" cy="228" r="35" fill="#000" opacity="0.25" filter="url(#sh)"/>
<circle cx="998.5" cy="227.5" r="32.5" fill="#ffffff"/>
<circle cx="1019.5" cy="227" r="6" fill="url(#dot)"/>
<g transform="translate(941.50 226.00) rotate(-90)"><text x="0" y="3" fill="#808080" font-size="9" font-family="Liberation Sans" text-anchor="middle">50mv</text></g>
<g transform="translate(955.81 194.26) rotate(-54)"><text x="0" y="3" fill="#808080" font-size="9" font-family="Liberation Sans" text-anchor="middle">100mv</text></g>
<g transform="translate(979.13 177.07) rotate(-22.6)"><text x="0" y="3" fill="#808080" font-size="9" font-family="Liberation Sans" text-anchor="middle">0.2V</text></g>
<g transform="translate(1016.22 176.02) rotate(18.5)"><text x="0" y="3" fill="#808080" font-size="9" font-family="Liberation Sans" text-anchor="middle">0.5v</text></g>
<g transform="translate(1042.22 194.96) rotate(54)"><text x="0" y="3" fill="#808080" font-size="9" font-family="Liberation Sans" text-anchor="middle">1v</text></g>
<g transform="translate(1054.49 225.04) rotate(89)"><text x="0" y="3" fill="#808080" font-size="9" font-family="Liberation Sans" text-anchor="middle">2v</text></g>
<g transform="translate(955.13 260.17) rotate(-127.6)"><text x="0" y="3" fill="#404040" font-size="9" font-family="Liberation Sans" text-anchor="middle">20mv</text></g>
<g transform="translate(1050.5 176.7) rotate(45)"><rect x="-13" y="-6.5" width="26" height="13" rx="1.5" fill="#40b4ec"/><text x="0" y="3.5" fill="#ffffff" font-size="9.5" textLength="21" lengthAdjust="spacingAndGlyphs" font-family="Liberation Sans" text-anchor="middle">ch: A</text></g>
<path d="M938.8,340.8 A60.8,60.8 0 0 1 1060.2,341.8" fill="none" stroke="#e8ec30" stroke-width="3"/>
<circle cx="999.5" cy="347" r="50" fill="#000" opacity="0.18" filter="url(#sh)"/>
<circle cx="999.5" cy="345" r="48" fill="url(#vouter)"/>
<circle cx="999.5" cy="345" r="43" fill="url(#vknurl)"/>
<line x1="1035.5" y1="345.0" x2="1041.5" y2="345.0" stroke="#808080" stroke-width="0.7" opacity="0.35"/>
<line x1="1035.4" y1="347.5" x2="1041.4" y2="347.9" stroke="#808080" stroke-width="0.7" opacity="0.35"/>
<line x1="1035.1" y1="350.0" x2="1041.1" y2="350.8" stroke="#808080" stroke-width="0.7" opacity="0.35"/>
<line x1="1034.7" y1="352.5" x2="1040.6" y2="353.7" stroke="#808080" stroke-width="0.7" opacity="0.35"/>
<line x1="1034.1" y1="354.9" x2="1039.9" y2="356.6" stroke="#808080" stroke-width="0.7" opacity="0.35"/>
<line x1="1033.3" y1="357.3" x2="1039.0" y2="359.4" stroke="#808080" stroke-width="0.7" opacity="0.35"/>
<line x1="1032.4" y1="359.6" x2="1037.9" y2="362.1" stroke="#808080" stroke-width="0.7" opacity="0.35"/>
<line x1="1031.3" y1="361.9" x2="1036.6" y2="364.7" stroke="#808080" stroke-width="0.7" opacity="0.35"/>
<line x1="1030.0" y1="364.1" x2="1035.1" y2="367.3" stroke="#808080" stroke-width="0.7" opacity="0.35"/>
<line x1="1028.6" y1="366.2" x2="1033.5" y2="369.7" stroke="#808080" stroke-width="0.7" opacity="0.35"/>
<line x1="1027.1" y1="368.1" x2="1031.7" y2="372.0" stroke="#808080" stroke-width="0.7" opacity="0.35"/>
<line x1="1025.4" y1="370.0" x2="1029.7" y2="374.2" stroke="#808080" stroke-width="0.7" opacity="0.35"/>
<line x1="1023.6" y1="371.8" x2="1027.6" y2="376.2" stroke="#808080" stroke-width="0.7" opacity="0.35"/>
<line x1="1021.7" y1="373.4" x2="1025.4" y2="378.1" stroke="#808080" stroke-width="0.7" opacity="0.35"/>
<line x1="1019.6" y1="374.8" x2="1023.0" y2="379.8" stroke="#808080" stroke-width="0.7" opacity="0.35"/>
<line x1="1017.5" y1="376.2" x2="1020.5" y2="381.4" stroke="#808080" stroke-width="0.7" opacity="0.35"/>
<line x1="1015.3" y1="377.4" x2="1017.9" y2="382.7" stroke="#808080" stroke-width="0.7" opacity="0.35"/>
<line x1="1013.0" y1="378.4" x2="1015.2" y2="383.9" stroke="#808080" stroke-width="0.7" opacity="0.35"/>
<line x1="1010.6" y1="379.2" x2="1012.5" y2="384.9" stroke="#808080" stroke-width="0.7" opacity="0.35"/>
<line x1="1008.2" y1="379.9" x2="1009.7" y2="385.8" stroke="#808080" stroke-width="0.7" opacity="0.35"/>
<line x1="1005.8" y1="380.5" x2="1006.8" y2="386.4" stroke="#808080" stroke-width="0.7" opacity="0.35"/>
<line x1="1003.3" y1="380.8" x2="1003.9" y2="386.8" stroke="#808080" stroke-width="0.7" opacity="0.35"/>
<line x1="1000.8" y1="381.0" x2="1001.0" y2="387.0" stroke="#808080" stroke-width="0.7" opacity="0.35"/>
<line x1="998.2" y1="381.0" x2="998.0" y2="387.0" stroke="#808080" stroke-width="0.7" opacity="0.35"/>
<line x1="995.7" y1="380.8" x2="995.1" y2="386.8" stroke="#808080" stroke-width="0.7" opacity="0.35"/>
<line x1="993.2" y1="380.5" x2="992.2" y2="386.4" stroke="#808080" stroke-width="0.7" opacity="0.35"/>
<line x1="990.8" y1="379.9" x2="989.3" y2="385.8" stroke="#808080" stroke-width="0.7" opacity="0.35"/>
<line x1="988.4" y1="379.2" x2="986.5" y2="384.9" stroke="#808080" stroke-width="0.7" opacity="0.35"/>
<line x1="986.0" y1="378.4" x2="983.8" y2="383.9" stroke="#808080" stroke-width="0.7" opacity="0.35"/>
<line x1="983.7" y1="377.4" x2="981.1" y2="382.7" stroke="#808080" stroke-width="0.7" opacity="0.35"/>
<line x1="981.5" y1="376.2" x2="978.5" y2="381.4" stroke="#808080" stroke-width="0.7" opacity="0.35"/>
<line x1="979.4" y1="374.8" x2="976.0" y2="379.8" stroke="#808080" stroke-width="0.7" opacity="0.35"/>
<line x1="977.3" y1="373.4" x2="973.6" y2="378.1" stroke="#808080" stroke-width="0.7" opacity="0.35"/>
<line x1="975.4" y1="371.8" x2="971.4" y2="376.2" stroke="#808080" stroke-width="0.7" opacity="0.35"/>
<line x1="973.6" y1="370.0" x2="969.3" y2="374.2" stroke="#808080" stroke-width="0.7" opacity="0.35"/>
<line x1="971.9" y1="368.1" x2="967.3" y2="372.0" stroke="#808080" stroke-width="0.7" opacity="0.35"/>
<line x1="970.4" y1="366.2" x2="965.5" y2="369.7" stroke="#808080" stroke-width="0.7" opacity="0.35"/>
<line x1="969.0" y1="364.1" x2="963.9" y2="367.3" stroke="#808080" stroke-width="0.7" opacity="0.35"/>
<line x1="967.7" y1="361.9" x2="962.4" y2="364.7" stroke="#808080" stroke-width="0.7" opacity="0.35"/>
<line x1="966.6" y1="359.6" x2="961.1" y2="362.1" stroke="#808080" stroke-width="0.7" opacity="0.35"/>
<line x1="965.7" y1="357.3" x2="960.0" y2="359.4" stroke="#808080" stroke-width="0.7" opacity="0.35"/>
<line x1="964.9" y1="354.9" x2="959.1" y2="356.6" stroke="#808080" stroke-width="0.7" opacity="0.35"/>
<line x1="964.3" y1="352.5" x2="958.4" y2="353.7" stroke="#808080" stroke-width="0.7" opacity="0.35"/>
<line x1="963.9" y1="350.0" x2="957.9" y2="350.8" stroke="#808080" stroke-width="0.7" opacity="0.35"/>
<line x1="963.6" y1="347.5" x2="957.6" y2="347.9" stroke="#808080" stroke-width="0.7" opacity="0.35"/>
<line x1="963.5" y1="345.0" x2="957.5" y2="345.0" stroke="#808080" stroke-width="0.7" opacity="0.35"/>
<line x1="963.6" y1="342.5" x2="957.6" y2="342.1" stroke="#808080" stroke-width="0.7" opacity="0.35"/>
<line x1="963.9" y1="340.0" x2="957.9" y2="339.2" stroke="#808080" stroke-width="0.7" opacity="0.35"/>
<line x1="964.3" y1="337.5" x2="958.4" y2="336.3" stroke="#808080" stroke-width="0.7" opacity="0.35"/>
<line x1="964.9" y1="335.1" x2="959.1" y2="333.4" stroke="#808080" stroke-width="0.7" opacity="0.35"/>
<line x1="965.7" y1="332.7" x2="960.0" y2="330.6" stroke="#808080" stroke-width="0.7" opacity="0.35"/>
<line x1="966.6" y1="330.4" x2="961.1" y2="327.9" stroke="#808080" stroke-width="0.7" opacity="0.35"/>
<line x1="967.7" y1="328.1" x2="962.4" y2="325.3" stroke="#808080" stroke-width="0.7" opacity="0.35"/>
<line x1="969.0" y1="325.9" x2="963.9" y2="322.7" stroke="#808080" stroke-width="0.7" opacity="0.35"/>
<line x1="970.4" y1="323.8" x2="965.5" y2="320.3" stroke="#808080" stroke-width="0.7" opacity="0.35"/>
<line x1="971.9" y1="321.9" x2="967.3" y2="318.0" stroke="#808080" stroke-width="0.7" opacity="0.35"/>
<line x1="973.6" y1="320.0" x2="969.3" y2="315.8" stroke="#808080" stroke-width="0.7" opacity="0.35"/>
<line x1="975.4" y1="318.2" x2="971.4" y2="313.8" stroke="#808080" stroke-width="0.7" opacity="0.35"/>
<line x1="977.3" y1="316.6" x2="973.6" y2="311.9" stroke="#808080" stroke-width="0.7" opacity="0.35"/>
<line x1="979.4" y1="315.2" x2="976.0" y2="310.2" stroke="#808080" stroke-width="0.7" opacity="0.35"/>
<line x1="981.5" y1="313.8" x2="978.5" y2="308.6" stroke="#808080" stroke-width="0.7" opacity="0.35"/>
<line x1="983.7" y1="312.6" x2="981.1" y2="307.3" stroke="#808080" stroke-width="0.7" opacity="0.35"/>
<line x1="986.0" y1="311.6" x2="983.8" y2="306.1" stroke="#808080" stroke-width="0.7" opacity="0.35"/>
<line x1="988.4" y1="310.8" x2="986.5" y2="305.1" stroke="#808080" stroke-width="0.7" opacity="0.35"/>
<line x1="990.8" y1="310.1" x2="989.3" y2="304.2" stroke="#808080" stroke-width="0.7" opacity="0.35"/>
<line x1="993.2" y1="309.5" x2="992.2" y2="303.6" stroke="#808080" stroke-width="0.7" opacity="0.35"/>
<line x1="995.7" y1="309.2" x2="995.1" y2="303.2" stroke="#808080" stroke-width="0.7" opacity="0.35"/>
<line x1="998.2" y1="309.0" x2="998.0" y2="303.0" stroke="#808080" stroke-width="0.7" opacity="0.35"/>
<line x1="1000.8" y1="309.0" x2="1001.0" y2="303.0" stroke="#808080" stroke-width="0.7" opacity="0.35"/>
<line x1="1003.3" y1="309.2" x2="1003.9" y2="303.2" stroke="#808080" stroke-width="0.7" opacity="0.35"/>
<line x1="1005.8" y1="309.5" x2="1006.8" y2="303.6" stroke="#808080" stroke-width="0.7" opacity="0.35"/>
<line x1="1008.2" y1="310.1" x2="1009.7" y2="304.2" stroke="#808080" stroke-width="0.7" opacity="0.35"/>
<line x1="1010.6" y1="310.8" x2="1012.5" y2="305.1" stroke="#808080" stroke-width="0.7" opacity="0.35"/>
<line x1="1013.0" y1="311.6" x2="1015.2" y2="306.1" stroke="#808080" stroke-width="0.7" opacity="0.35"/>
<line x1="1015.3" y1="312.6" x2="1017.9" y2="307.3" stroke="#808080" stroke-width="0.7" opacity="0.35"/>
<line x1="1017.5" y1="313.8" x2="1020.5" y2="308.6" stroke="#808080" stroke-width="0.7" opacity="0.35"/>
<line x1="1019.6" y1="315.2" x2="1023.0" y2="310.2" stroke="#808080" stroke-width="0.7" opacity="0.35"/>
<line x1="1021.7" y1="316.6" x2="1025.4" y2="311.9" stroke="#808080" stroke-width="0.7" opacity="0.35"/>
<line x1="1023.6" y1="318.2" x2="1027.6" y2="313.8" stroke="#808080" stroke-width="0.7" opacity="0.35"/>
<line x1="1025.4" y1="320.0" x2="1029.7" y2="315.8" stroke="#808080" stroke-width="0.7" opacity="0.35"/>
<line x1="1027.1" y1="321.9" x2="1031.7" y2="318.0" stroke="#808080" stroke-width="0.7" opacity="0.35"/>
<line x1="1028.6" y1="323.8" x2="1033.5" y2="320.3" stroke="#808080" stroke-width="0.7" opacity="0.35"/>
<line x1="1030.0" y1="325.9" x2="1035.1" y2="322.7" stroke="#808080" stroke-width="0.7" opacity="0.35"/>
<line x1="1031.3" y1="328.1" x2="1036.6" y2="325.3" stroke="#808080" stroke-width="0.7" opacity="0.35"/>
<line x1="1032.4" y1="330.4" x2="1037.9" y2="327.9" stroke="#808080" stroke-width="0.7" opacity="0.35"/>
<line x1="1033.3" y1="332.7" x2="1039.0" y2="330.6" stroke="#808080" stroke-width="0.7" opacity="0.35"/>
<line x1="1034.1" y1="335.1" x2="1039.9" y2="333.4" stroke="#808080" stroke-width="0.7" opacity="0.35"/>
<line x1="1034.7" y1="337.5" x2="1040.6" y2="336.3" stroke="#808080" stroke-width="0.7" opacity="0.35"/>
<line x1="1035.1" y1="340.0" x2="1041.1" y2="339.2" stroke="#808080" stroke-width="0.7" opacity="0.35"/>
<line x1="1035.4" y1="342.5" x2="1041.4" y2="342.1" stroke="#808080" stroke-width="0.7" opacity="0.35"/>
<circle cx="999.5" cy="347" r="35" fill="#000" opacity="0.25" filter="url(#sh)"/>
<circle cx="998.5" cy="346.5" r="32.5" fill="#ffffff"/>
<circle cx="1019.5" cy="346" r="6" fill="url(#dot)"/>
<g transform="translate(941.50 345.00) rotate(-90)"><text x="0" y="3" fill="#808080" font-size="9" font-family="Liberation Sans" text-anchor="middle">50mv</text></g>
<g transform="translate(955.81 313.26) rotate(-54)"><text x="0" y="3" fill="#808080" font-size="9" font-family="Liberation Sans" text-anchor="middle">100mv</text></g>
<g transform="translate(979.13 296.07) rotate(-22.6)"><text x="0" y="3" fill="#808080" font-size="9" font-family="Liberation Sans" text-anchor="middle">0.2V</text></g>
<g transform="translate(1016.22 295.02) rotate(18.5)"><text x="0" y="3" fill="#808080" font-size="9" font-family="Liberation Sans" text-anchor="middle">0.5v</text></g>
<g transform="translate(1042.22 313.96) rotate(54)"><text x="0" y="3" fill="#808080" font-size="9" font-family="Liberation Sans" text-anchor="middle">1v</text></g>
<g transform="translate(1054.49 344.04) rotate(89)"><text x="0" y="3" fill="#808080" font-size="9" font-family="Liberation Sans" text-anchor="middle">2v</text></g>
<g transform="translate(955.13 379.17) rotate(-127.6)"><text x="0" y="3" fill="#404040" font-size="9" font-family="Liberation Sans" text-anchor="middle">20mv</text></g>
<g transform="translate(1050.5 296) rotate(45)"><rect x="-13" y="-6.5" width="26" height="13" rx="1.5" fill="#f0f028"/><text x="0" y="3.5" fill="#707020" font-size="9.5" textLength="21" lengthAdjust="spacingAndGlyphs" font-family="Liberation Sans" text-anchor="middle">ch: B</text></g>
<polygon points="1067.5,184.2 1071,184.2 1069.25,186.2" fill="#101010"/>
<rect x="1076" y="178.2" width="25" height="13.2" fill="#78cef0"/>
<text x="1099" y="188.2" fill="#404850" font-size="9" font-family="Liberation Sans" text-anchor="end" font-weight="normal" textLength="10" lengthAdjust="spacingAndGlyphs">1X</text>
<rect x="1062.5" y="195.7" width="124.5" height="32" fill="#eeeeee" stroke="#e0e0e0" stroke-width="0.8"/>
<rect x="1068.5" y="201.7" width="46.5" height="15.5" rx="7.7" fill="#70d0f0" stroke="#5aa8c8" stroke-width="1"/>
<circle cx="1078" cy="210.7" r="9.3" fill="#000" opacity="0.2" filter="url(#sh)"/>
<circle cx="1077.5" cy="209.7" r="8.8" fill="url(#wcirc)" stroke="#b0b0b8" stroke-width="0.6"/>
<text x="1091" y="213.7" fill="#2a6a88" font-size="10.5" font-family="Liberation Sans" text-anchor="start" font-weight="bold" textLength="17" lengthAdjust="spacingAndGlyphs">chA</text>
<text x="1122" y="213.2" fill="#c4c4c4" font-size="9" font-family="Liberation Sans" text-anchor="start" font-weight="normal" textLength="11" lengthAdjust="spacingAndGlyphs">DC</text>
<rect x="1138" y="205.7" width="30" height="10" rx="5" fill="#d8d8d8"/>
<rect x="1138" y="205.7" width="19" height="10" rx="5" fill="url(#tan)"/>
<text x="1173.5" y="213.2" fill="#c4c4c4" font-size="9" font-family="Liberation Sans" text-anchor="start" font-weight="normal" textLength="10" lengthAdjust="spacingAndGlyphs">AC</text>
<polygon points="1067.5,302.5 1071,302.5 1069.25,304.5" fill="#101010"/>
<rect x="1076" y="296.5" width="25" height="13.2" fill="#f0f820"/>
<text x="1099" y="306.5" fill="#404850" font-size="9" font-family="Liberation Sans" text-anchor="end" font-weight="normal" textLength="10" lengthAdjust="spacingAndGlyphs">1X</text>
<rect x="1062.5" y="314.0" width="124.5" height="32" fill="#eeeeee" stroke="#e0e0e0" stroke-width="0.8"/>
<rect x="1068.5" y="320.0" width="46.5" height="15.5" rx="7.7" fill="#e8f860" stroke="#c0c840" stroke-width="1"/>
<circle cx="1078" cy="329.0" r="9.3" fill="#000" opacity="0.2" filter="url(#sh)"/>
<circle cx="1077.5" cy="328.0" r="8.8" fill="url(#wcirc)" stroke="#b0b0b8" stroke-width="0.6"/>
<text x="1091" y="332.0" fill="#505020" font-size="10.5" font-family="Liberation Sans" text-anchor="start" font-weight="bold" textLength="17" lengthAdjust="spacingAndGlyphs">chB</text>
<text x="1122" y="331.5" fill="#c4c4c4" font-size="9" font-family="Liberation Sans" text-anchor="start" font-weight="normal" textLength="11" lengthAdjust="spacingAndGlyphs">DC</text>
<rect x="1138" y="324.0" width="30" height="10" rx="5" fill="#d8d8d8"/>
<rect x="1138" y="324.0" width="19" height="10" rx="5" fill="url(#tan)"/>
<text x="1173.5" y="331.5" fill="#c4c4c4" font-size="9" font-family="Liberation Sans" text-anchor="start" font-weight="normal" textLength="10" lengthAdjust="spacingAndGlyphs">AC</text>
<rect x="1064" y="228" width="87.5" height="43" fill="#84c8f0"/>
<rect x="1067" y="233" width="8.5" height="8.5" fill="#ffffff" stroke="#8090a0" stroke-width="0.6"/>
<path d="M1068.5,237 l2,3 l3.5,-5.5" fill="none" stroke="#3050a0" stroke-width="1"/>
<text x="1078.5" y="240" fill="#202830" font-size="8" font-family="Liberation Sans" text-anchor="start" font-weight="normal" textLength="21.5" lengthAdjust="spacingAndGlyphs">Trigger</text>
<rect x="1109.5" y="231" width="39" height="17.5" fill="#f0f0f0" stroke="#a8d0e8" stroke-width="0.6"/>
<text x="1129" y="242" fill="#202020" font-size="8" font-family="Liberation Sans" text-anchor="middle" font-weight="normal" textLength="21" lengthAdjust="spacingAndGlyphs">Normal</text>
<rect x="1109.5" y="251.5" width="39" height="17" fill="#f0f0f0" stroke="#a8d0e8" stroke-width="0.6"/>
<text x="1129" y="262" fill="#202020" font-size="8" font-family="Liberation Sans" text-anchor="middle" font-weight="normal" textLength="19" lengthAdjust="spacingAndGlyphs">Single</text>
<rect x="1066.5" y="250.7" width="18" height="17.8" fill="#fcd8a8" stroke="#806040" stroke-width="0.8"/>
<path d="M1068,266 h5.5 v-12 h9.5" fill="none" stroke="#101010" stroke-width="1.3"/>
<polygon points="1070.5,261 1076.5,261 1073.5,256" fill="#101010"/>
<rect x="1087" y="250.7" width="17.5" height="17.8" fill="#f8f8f8"/>
<path d="M1088,254 h5.5 v12 h9.5" fill="none" stroke="#101010" stroke-width="1.3"/>
<polygon points="1090.5,258 1096.5,258 1093.5,263" fill="#101010"/>
<rect x="1155.5" y="232" width="8" height="8" fill="#f8f8f8" stroke="#909090" stroke-width="0.7"/>
<text x="1167" y="240" fill="#202020" font-size="8.5" font-family="Liberation Sans" text-anchor="start" font-weight="normal" textLength="17.5" lengthAdjust="spacingAndGlyphs">Glow</text>
<clipPath id="spc"><rect x="1117.5" y="383" width="71" height="16" rx="6"/></clipPath>
<rect x="1117.5" y="383" width="71" height="16" rx="6" fill="url(#supp)"/>
<rect x="1117" y="383" width="17" height="16" fill="#900010" opacity="0.35" clip-path="url(#spc)"/>
<rect x="1134" y="383.5" width="0.8" height="15" fill="#780010" opacity="0.6"/>
<path d="M1124,388.5 h4 v3 h2.2 l-4.2,4.5 l-4.2,-4.5 h2.2z" fill="#ffffff" opacity="0.95"/>
<text x="1137" y="395.5" fill="#fff4f4" font-size="12.5" font-family="Liberation Sans" text-anchor="start" font-weight="normal" textLength="42" lengthAdjust="spacingAndGlyphs">support</text>
<rect x="933.5" y="407" width="253.5" height="37.5" rx="1.5" fill="none" stroke="#f4f4f4" stroke-width="1"/>
<rect x="940" y="403" width="64" height="8" fill="#acacac"/>
<text x="943" y="410" fill="#f0f0f0" font-size="7.8" font-family="Liberation Sans" text-anchor="start" font-weight="normal" textLength="55" lengthAdjust="spacingAndGlyphs">Acquisiton Mode</text>
<circle cx="943.5" cy="428" r="2.6" fill="#e8e8e8" stroke="#c0c0c0" stroke-width="0.5"/>
<text x="952.0" y="431" fill="#f2f2f2" font-size="8" font-family="Liberation Sans" text-anchor="start" font-weight="normal" textLength="24" lengthAdjust="spacingAndGlyphs">Normal</text>
<circle cx="1017.5" cy="428" r="2.6" fill="#e8e8e8" stroke="#c0c0c0" stroke-width="0.5"/>
<circle cx="1017.5" cy="428" r="1.4" fill="#2060a0"/>
<text x="1026.0" y="431" fill="#f2f2f2" font-size="8" font-family="Liberation Sans" text-anchor="start" font-weight="normal" textLength="42" lengthAdjust="spacingAndGlyphs">Peak-Detect</text>
<circle cx="1106.5" cy="428" r="2.6" fill="#e8e8e8" stroke="#c0c0c0" stroke-width="0.5"/>
<text x="1115.0" y="431" fill="#f2f2f2" font-size="8" font-family="Liberation Sans" text-anchor="start" font-weight="normal" textLength="32" lengthAdjust="spacingAndGlyphs">High-Res</text>
<rect x="1089" y="596" width="93" height="31" rx="15.5" fill="#2a2a2a"/>
<rect x="1091.5" y="598.5" width="88" height="26" rx="13" fill="url(#stopb)"/>
<text x="1136" y="614.5" fill="#1a1a1a" font-size="11" font-family="Liberation Sans" text-anchor="middle" font-weight="normal" textLength="58" lengthAdjust="spacingAndGlyphs">Stop Device</text>
</svg>
<div class="a" style="left:1117px;top:43px;width:28px;height:28px;border-radius:50%;background:conic-gradient(#e4e4e4 0deg,#ffffff 40deg,#9c9c9c 95deg,#eeeeee 140deg,#dcdcdc 180deg,#ffffff 220deg,#9c9c9c 275deg,#eeeeee 320deg,#e4e4e4 360deg);box-shadow:inset 0 0 1px 1px rgba(80,80,80,0.5)"></div>
<div class="a" style="left:1125px;top:51px;width:12px;height:12px;border-radius:50%;background:radial-gradient(circle at 45% 40%,#e02030,#b00010 70%,#700010);"></div>
</body></html>
